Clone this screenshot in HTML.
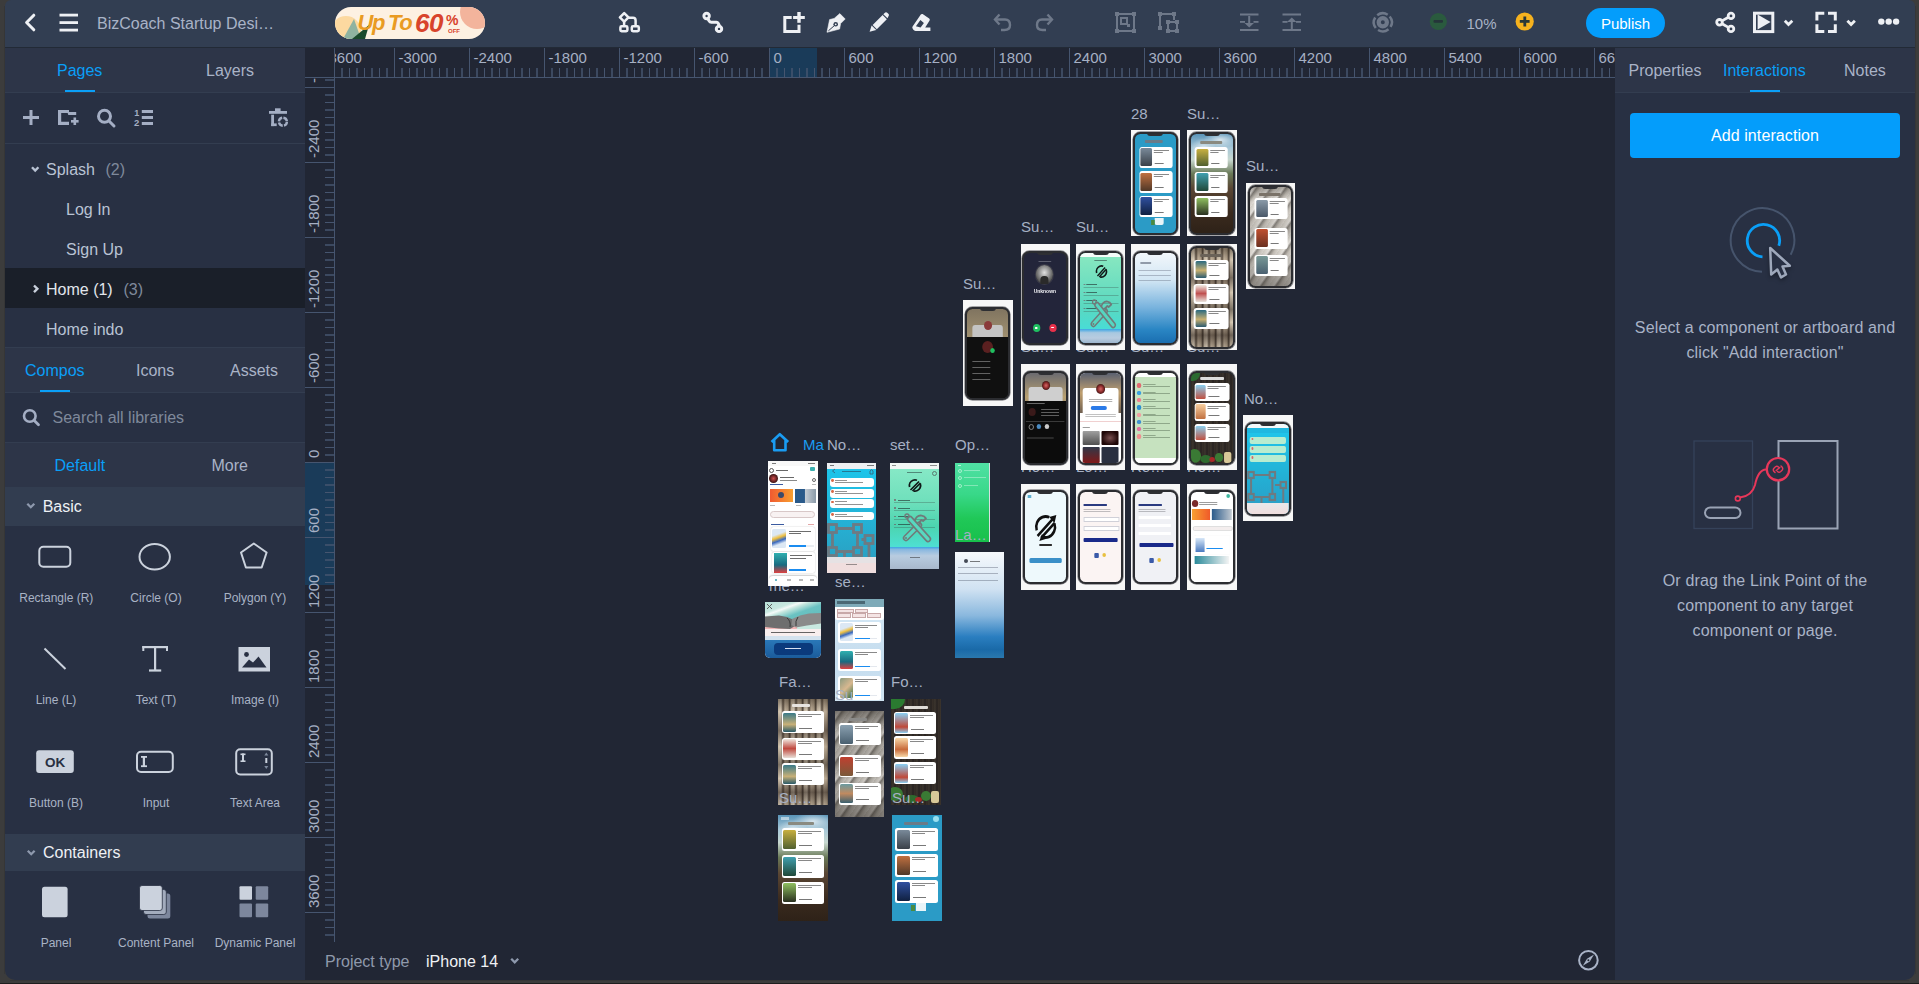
<!DOCTYPE html><html><head><meta charset="utf-8"><style>
html,body{margin:0;padding:0;}
body{width:1919px;height:984px;background:#3c3c3c;overflow:hidden;position:relative;font-family:"Liberation Sans",sans-serif;}
.t{position:absolute;white-space:nowrap;}
.r{position:absolute;}
#app{position:absolute;left:0;top:0;width:1919px;height:984px;clip-path:inset(0px 4px 4px 5px round 6px 6px 10px 10px);}
svg{position:absolute;overflow:visible;}
</style></head><body>
<div style="position:absolute;left:0;top:983px;width:1919px;height:1px;background:#1e1e1e"></div>
<div style="position:absolute;left:4px;top:6px;width:1px;height:968px;background:#363636"></div><div style="position:absolute;left:1915px;top:6px;width:1px;height:968px;background:#363636"></div><div style="position:absolute;left:10px;top:980px;width:1899px;height:1px;background:#363636"></div>
<div id="app">
<div class="r" style="left:0px;top:0px;width:1919px;height:47px;background:#323e52;"></div>
<div class="r" style="left:0px;top:47px;width:1919px;height:1px;background:#222a36;"></div>
<div class="r" style="left:0px;top:48px;width:305px;height:936px;background:#283043;"></div>
<div class="r" style="left:0px;top:48px;width:305px;height:44px;background:#2d3548;"></div>
<div class="r" style="left:0px;top:92px;width:305px;height:1px;background:#333d50;"></div>
<div class="r" style="left:305px;top:48px;width:1310px;height:936px;background:#212634;"></div>
<div class="r" style="left:1615px;top:48px;width:304px;height:936px;background:#283043;"></div>
<div class="r" style="left:1615px;top:48px;width:304px;height:44px;background:#2d3548;"></div>
<div class="r" style="left:1615px;top:92px;width:304px;height:1px;background:#333d50;"></div>
<svg style="left:0px;top:0px;" width="1919" height="47" viewBox="0 0 1919 47">
<polyline points="33.8,15.2 26.6,22.5 33.8,29.8" fill="none" stroke="#eef0f4" stroke-width="3" stroke-linecap="round" stroke-linejoin="round"/>
<rect x="59.5" y="13.7" width="18.5" height="2.8" fill="#eef0f4"/>
<rect x="59.5" y="21.2" width="18.5" height="2.8" fill="#eef0f4"/>
<rect x="59.5" y="28.7" width="18.5" height="2.8" fill="#eef0f4"/>
</svg>
<div class="t" style="left:97px;top:16px;font-size:16px;line-height:16px;color:#a9b3c7;">BizCoach Startup Desi…</div>
<div class="r" style="left:335px;top:7px;width:150px;height:32px;border-radius:16px;background:#fdf1e2;overflow:hidden;">
<div class="r" style="left:-4px;top:9px;width:30px;height:30px;border-radius:50%;background:#fcd9a0"></div>
<div class="r" style="left:125px;top:-12px;width:34px;height:34px;border-radius:50%;background:#f3b49c"></div>
<svg style="left:0;top:0" width="150" height="32"><polygon points="8,32 19,12 26,32" fill="#8fb3a0"/><polygon points="17,32 34,18 30,32" fill="#1a4a2c"/></svg>
<div class="t" style="left:22.5px;top:5px;font-size:22px;line-height:22px;font-weight:bold;font-style:italic;color:#e99b22;letter-spacing:-1.3px;word-spacing:-1px">Up To</div>
<div class="t" style="left:80px;top:3px;font-size:26px;line-height:26px;font-weight:bold;font-style:italic;color:#d8432b;letter-spacing:-0.5px">60</div>
<div class="t" style="left:111px;top:6px;font-size:14px;line-height:14px;font-weight:bold;color:#d8432b">%</div>
<div class="t" style="left:113px;top:21px;font-size:6px;line-height:6px;font-weight:bold;color:#d8432b">OFF</div>
</div>
<svg style="left:0px;top:0px;" width="1919" height="47" viewBox="0 0 1919 47">
<g fill="none" stroke="#eef0f4" stroke-width="2.5" stroke-linejoin="round">
  <polygon points="624.2,13.1 628.5,17.4 624.2,21.7 619.9,17.4"/>
  <line x1="624.1" y1="21.5" x2="624.1" y2="25.5"/>
  <path d="M628.3,17.8 H633 Q635.6,17.8 635.6,20.5 V25.5"/>
  <rect x="620.4" y="26.3" width="7" height="5" rx="1.2"/>
  <rect x="631.8" y="26.3" width="7" height="5" rx="1.2"/>
</g>
<g fill="none" stroke="#eef0f4" stroke-width="3">
  <circle cx="706.6" cy="16" r="2.7"/>
  <circle cx="719" cy="28.9" r="2.7"/>
  <path d="M707.8,18.8 L709.2,21 Q709.9,22.3 711.4,22.3 H716.5 Q717.6,22.3 718.3,23.5 L719.5,26"/>
</g>
<g fill="none" stroke="#eef0f4" stroke-width="3" stroke-linejoin="miter">
  <path d="M791.7,17.5 H784.8 V31.5 H799 V24.8"/>
</g>
<g fill="#eef0f4">
  <rect x="797.3" y="12" width="3.4" height="10.8"/>
  <rect x="793.1" y="16" width="11.7" height="3"/>
  <path d="M827,32.3 L829.6,19.6 L834.2,18.4 L839.8,13.6 L845.2,19 L840.6,23.6 L839.6,29 Z" stroke="#eef0f4" stroke-width="0.6" stroke-linejoin="round"/>
  <path d="M869.6,31.8 L871.6,25.6 L876.3,30 Z"/>
  <path d="M872.6,25 L882.6,15 L886.8,19.2 L876.8,29.2 Z"/>
  <path d="M883.3,14.3 L885.2,12.6 Q886.2,11.8 887.2,12.7 L888.6,14.1 Q889.4,15 888.6,16 L887.5,18.3 Z"/>
  <path d="M912.6,26.4 L920.8,14.4 Q921.6,13.6 922.6,14.1 L929.2,18.6 Q930.2,19.4 929.6,20.6 L925.2,27.6 H930.4 V30.9 H915.6 Q914,30.9 913.2,29.6 L912.5,28.3 Q912,27.3 912.6,26.4 Z M915.9,26.3 L920.4,19.9 L923.9,22.9 L920.6,27.6 Z" fill-rule="evenodd"/>
</g>
<circle cx="835.7" cy="24.3" r="2.3" fill="#323e52"/>
<circle cx="835.7" cy="24.3" r="0.9" fill="#eef0f4"/>
<line x1="828.4" y1="30.8" x2="834.4" y2="25.6" stroke="#323e52" stroke-width="1"/>
</svg>
<svg style="left:0px;top:0px;" width="1919" height="47" viewBox="0 0 1919 47">
<g fill="none" stroke="#6e7889" stroke-width="2.4">
  <path d="M995.5,19.5 H1005 Q1010,19.5 1010,25 Q1010,30 1004.5,30 H1001"/>
  <polyline points="999.5,14.5 995,19.5 999.5,24.5" stroke-linejoin="miter"/>
  <path d="M1051.5,19.5 H1042 Q1037,19.5 1037,25 Q1037,30 1042.5,30 H1046"/>
  <polyline points="1047.5,14.5 1052,19.5 1047.5,24.5"/>
</g>
<g fill="#6e7889">
  <rect x="1115" y="12" width="4" height="4"/><rect x="1132" y="12" width="4" height="4"/>
  <rect x="1115" y="29" width="4" height="4"/><rect x="1132" y="29" width="4" height="4"/>
  <rect x="1118" y="13" width="14" height="2"/><rect x="1118" y="30" width="14" height="2"/>
  <rect x="1116" y="15" width="2" height="15"/><rect x="1133" y="15" width="2" height="15"/>
  <rect x="1121" y="18" width="6" height="6" fill="none" stroke="#6e7889" stroke-width="2"/>
  <rect x="1127" y="24" width="3" height="3"/>
  <rect x="1158" y="12" width="4" height="4"/><rect x="1172" y="12" width="4" height="4"/>
  <rect x="1158" y="26" width="4" height="4"/>
  <rect x="1161" y="13" width="12" height="2"/><rect x="1159" y="15" width="2" height="12"/>
  <rect x="1173" y="15" width="2" height="5"/>
  <rect x="1166" y="20" width="4" height="4"/><rect x="1175" y="20" width="4" height="4"/>
  <rect x="1166" y="29" width="4" height="4"/><rect x="1175" y="29" width="4" height="4"/>
  <rect x="1169" y="21" width="7" height="2"/><rect x="1169" y="30" width="7" height="2"/>
  <rect x="1167" y="23" width="2" height="7"/><rect x="1176" y="23" width="2" height="7"/>
  <rect x="1240" y="13.5" width="18.5" height="2"/>
  <rect x="1240" y="21" width="5" height="1.8"/><rect x="1253.5" y="21" width="5" height="1.8"/>
  <rect x="1240" y="29" width="18.5" height="2"/>
  <rect x="1248.2" y="16" width="2" height="8"/>
  <polygon points="1244.5,23 1254,23 1249.2,27.5"/>
  <rect x="1282.5" y="13.5" width="18.5" height="2"/>
  <rect x="1282.5" y="21" width="5" height="1.8"/><rect x="1296" y="21" width="5" height="1.8"/>
  <rect x="1282.5" y="29" width="18.5" height="2"/>
  <rect x="1290.8" y="21" width="2" height="8"/>
  <polygon points="1287,22 1296.5,22 1291.8,17.5"/>
</g>
<g fill="none" stroke="#6e7889">
  <circle cx="1382.8" cy="22.3" r="9" stroke-width="2.5" stroke-dasharray="11.1 3.04" transform="rotate(-40 1382.8 22.3)"/>
  <circle cx="1382.8" cy="22.3" r="4.1" stroke-width="4.2"/>
</g>
<circle cx="1438.3" cy="21.5" r="8.6" fill="#2a5a3e"/>
<rect x="1433.5" y="20" width="9.5" height="2.8" rx="1" fill="#25353a"/>
<circle cx="1524.7" cy="21.5" r="9.1" fill="#f6b21e"/>
<rect x="1519.8" y="20" width="9.8" height="2.8" fill="#2b3838"/>
<rect x="1523.4" y="16.5" width="2.8" height="10" fill="#2b3838"/>
</svg>
<div class="t" style="left:1466.5px;top:16px;font-size:15px;line-height:15px;color:#a9b3c7;">10%</div>
<div class="r" style="left:1586px;top:8px;width:79px;height:30px;border-radius:15px;background:#049dfb"></div>
<div class="t" style="left:1586.0px;width:79px;text-align:center;top:16px;font-size:15px;line-height:15px;color:#ffffff;">Publish</div>
<svg style="left:0px;top:0px;" width="1919" height="47" viewBox="0 0 1919 47">
<g fill="none" stroke="#eef0f4" stroke-width="2.8">
  <circle cx="1731" cy="15.9" r="2.8"/><circle cx="1719.5" cy="22.3" r="2.8"/><circle cx="1731" cy="28.9" r="2.8"/>
  <line x1="1722" y1="20.9" x2="1728.4" y2="17.3"/><line x1="1722" y1="23.8" x2="1728.4" y2="27.4"/>
  <rect x="1754.5" y="13.2" width="18.3" height="18.4" stroke-width="3"/>
  <polyline points="1784.8,20.8 1788.5,24.6 1792.3,20.8" stroke-width="2.8"/>
  <polyline points="1816.9,20.5 1816.9,13.2 1824.3,13.2" stroke-width="3"/><polyline points="1828,13.2 1835.3,13.2 1835.3,20.5" stroke-width="3"/>
  <polyline points="1816.9,24.3 1816.9,31.6 1824.3,31.6" stroke-width="3"/><polyline points="1828,31.6 1835.3,31.6 1835.3,24.3" stroke-width="3"/>
  <polyline points="1847.4,20.8 1851.1,24.6 1854.9,20.8" stroke-width="2.8"/>
</g>
<polygon points="1757.6,14.6 1770.6,22 1757.6,29.4" fill="#eef0f4"/>
<g fill="#eef0f4"><circle cx="1881.3" cy="21.6" r="3.2"/><circle cx="1888.7" cy="21.6" r="3.2"/><circle cx="1896.1" cy="21.6" r="3.2"/></g>
</svg>
<div class="t" style="left:57px;top:63px;font-size:16px;line-height:16px;color:#0a9ff7;">Pages</div>
<div class="t" style="left:206px;top:63px;font-size:16px;line-height:16px;color:#a9b3c7;">Layers</div>
<div class="r" style="left:65px;top:90px;width:30px;height:2px;background:#0a9ff7;"></div>
<svg style="left:0px;top:93px;" width="305" height="50" viewBox="0 0 305 50">
<g fill="#a4aec4" transform="translate(0,-93)">
  <rect x="29.5" y="110" width="3" height="15"/>
  <rect x="23" y="116" width="16" height="3"/>
  <path d="M58,110 H69 V112 H76.2 V115 H69 Q67.8,115 67.8,113.5 V113 H61.2 V121.8 H69 V125 H58 Z"/>
  <rect x="73.5" y="117.5" width="2.6" height="7.5"/>
  <rect x="71" y="120" width="7.6" height="2.6"/>
  <rect x="141.8" y="110" width="11.2" height="3"/>
  <rect x="141.8" y="116" width="11.2" height="3"/>
  <rect x="141.8" y="122" width="11.2" height="3"/>
  <rect x="275" y="108.3" width="5.6" height="3"/>
  <rect x="269" y="111" width="18" height="2.8"/>
  <rect x="271.2" y="114.7" width="2.8" height="11.4"/>
  <rect x="271.2" y="123.4" width="5.5" height="2.7"/>
</g>
<g fill="none" stroke="#a4aec4" transform="translate(0,-93)">
  <circle cx="104.5" cy="116.3" r="6" stroke-width="3"/>
  <line x1="109" y1="121" x2="114" y2="126" stroke-width="3" stroke-linecap="round"/>
  <circle cx="282.9" cy="121.7" r="4" stroke-width="2.4" stroke-dasharray="5 1.3"/>
</g>
<g fill="#a4aec4" font-family="Liberation Sans" font-weight="bold" transform="translate(0,-93)">
  <text x="134.2" y="116" font-size="9">1</text>
  <text x="134" y="126.2" font-size="9.5">2</text>
</g>
</svg>
<div class="r" style="left:0px;top:143px;width:305px;height:1px;background:#333d50;"></div>
<div class="t" style="left:46px;top:162px;font-size:16px;line-height:16px;color:#b9c3d4;">Splash</div>
<div class="t" style="left:105.5px;top:162px;font-size:16px;line-height:16px;color:#7f899b;">(2)</div>
<div class="t" style="left:66px;top:202px;font-size:16px;line-height:16px;color:#b9c3d4;">Log In</div>
<div class="t" style="left:66px;top:242px;font-size:16px;line-height:16px;color:#b9c3d4;">Sign Up</div>
<div class="r" style="left:0px;top:268px;width:305px;height:40px;background:#1a1f29;"></div>
<svg style="left:0px;top:150px;" width="305" height="200" viewBox="0 0 305 200">
<g fill="none" stroke="#b9c3d4" stroke-width="2.4" transform="translate(0,-150)">
  <polyline points="32,167.2 35.2,170.6 38.4,167.2"/>
  <polyline points="34,285.5 37.4,288.8 34,292.2" stroke="#c9d0dc"/>
</g></svg>
<div class="t" style="left:46px;top:282px;font-size:16px;line-height:16px;color:#e2e6ec;">Home (1)</div>
<div class="t" style="left:123.5px;top:282px;font-size:16px;line-height:16px;color:#7f899b;">(3)</div>
<div class="t" style="left:46px;top:322px;font-size:16px;line-height:16px;color:#b9c3d4;">Home indo</div>
<div class="r" style="left:0px;top:347px;width:305px;height:1px;background:#333d50;"></div>
<div class="r" style="left:0px;top:348px;width:305px;height:44px;background:#2d3548;"></div>
<div class="r" style="left:0px;top:392px;width:305px;height:1px;background:#333d50;"></div>
<div class="t" style="left:25px;top:363px;font-size:16px;line-height:16px;color:#0a9ff7;">Compos</div>
<div class="t" style="left:136px;top:363px;font-size:16px;line-height:16px;color:#a9b3c7;">Icons</div>
<div class="t" style="left:230px;top:363px;font-size:16px;line-height:16px;color:#a9b3c7;">Assets</div>
<div class="r" style="left:40px;top:390px;width:30px;height:2px;background:#0a9ff7;"></div>
<svg style="left:0px;top:400px;" width="60" height="40" viewBox="0 0 60 40"><g fill="none" stroke="#a4aec4" transform="translate(0,-400)">
<circle cx="29.8" cy="416" r="5.8" stroke-width="2.6"/>
<line x1="34.2" y1="420.4" x2="38.5" y2="424.7" stroke-width="2.8" stroke-linecap="round"/></g></svg>
<div class="t" style="left:52.5px;top:410px;font-size:16px;line-height:16px;color:#7f899b;">Search all libraries</div>
<div class="r" style="left:0px;top:442px;width:305px;height:1px;background:#333d50;"></div>
<div class="r" style="left:0px;top:443px;width:305px;height:44px;background:#2d3548;"></div>
<div class="t" style="left:54.5px;top:458px;font-size:16px;line-height:16px;color:#0a9ff7;">Default</div>
<div class="t" style="left:211.5px;top:458px;font-size:16px;line-height:16px;color:#a9b3c7;">More</div>
<div class="r" style="left:0px;top:487px;width:305px;height:39px;background:#323d50;"></div>
<svg style="left:0px;top:490px;" width="60" height="30" viewBox="0 0 60 30"><polyline transform="translate(0,-490)" points="27.3,503.8 30.8,507.2 34.3,503.8" fill="none" stroke="#8e99ad" stroke-width="2.3"/></svg>
<div class="t" style="left:42.7px;top:499px;font-size:16px;line-height:16px;color:#eef1f5;">Basic</div>
<svg style="left:0px;top:530px;" width="305" height="300" viewBox="0 0 305 300">
<g transform="translate(0,-530)" fill="none" stroke="#cbd2dd" stroke-width="2">
  <rect x="39.3" y="546.8" width="31" height="20" rx="4"/>
  <ellipse cx="154.7" cy="556.7" rx="15.2" ry="12.8"/>
  <polygon points="253.8,543.5 266.6,552.5 261.7,567.5 245.9,567.5 241,552.5" stroke-linejoin="round"/>
  <line x1="44.5" y1="648.5" x2="65.5" y2="669"/>
</g>
<g transform="translate(0,-530)" fill="#cbd2dd">
  <rect x="142.3" y="646" width="25.7" height="2.2"/>
  <rect x="142.3" y="646" width="2" height="5"/>
  <rect x="166" y="646" width="2" height="5"/>
  <rect x="154" y="646" width="2.2" height="25"/>
  <rect x="149" y="669.4" width="12.2" height="2.2"/>
  <path d="M238.5,647 H270 V671.5 H238.5 Z M242,667.5 H266.5 L258.5,656.5 L253,662.5 L249,659.5 Z" fill-rule="evenodd"/>
  <circle cx="246.5" cy="654.5" r="2.4" fill="#283043"/>
</g>
</svg>
<div class="t" style="left:6.299999999999997px;width:100px;text-align:center;top:592px;font-size:12px;line-height:12px;color:#a9b3c5;">Rectangle (R)</div>
<div class="t" style="left:106.0px;width:100px;text-align:center;top:592px;font-size:12px;line-height:12px;color:#a9b3c5;">Circle (O)</div>
<div class="t" style="left:205.0px;width:100px;text-align:center;top:592px;font-size:12px;line-height:12px;color:#a9b3c5;">Polygon (Y)</div>
<div class="t" style="left:6.0px;width:100px;text-align:center;top:694px;font-size:12px;line-height:12px;color:#a9b3c5;">Line (L)</div>
<div class="t" style="left:106.0px;width:100px;text-align:center;top:694px;font-size:12px;line-height:12px;color:#a9b3c5;">Text (T)</div>
<div class="t" style="left:205.0px;width:100px;text-align:center;top:694px;font-size:12px;line-height:12px;color:#a9b3c5;">Image (I)</div>
<svg style="left:0px;top:740px;" width="305" height="40" viewBox="0 0 305 40">
<g transform="translate(0,-740)">
  <rect x="36.2" y="750.3" width="37.6" height="22.8" rx="3" fill="#cbd2dd"/>
  <text x="55" y="767" font-family="Liberation Sans" font-weight="bold" font-size="13.5" fill="#283043" text-anchor="middle">OK</text>
  <rect x="137" y="751.8" width="35.8" height="20.2" rx="4" fill="none" stroke="#cbd2dd" stroke-width="2"/>
  <rect x="142.8" y="756" width="2.2" height="11" fill="#cbd2dd"/>
  <rect x="141" y="756" width="6" height="1.8" fill="#cbd2dd"/>
  <rect x="141" y="765.3" width="6" height="1.8" fill="#cbd2dd"/>
  <rect x="236.2" y="749.2" width="35.6" height="25.3" rx="4" fill="none" stroke="#cbd2dd" stroke-width="2"/>
  <rect x="242" y="753.5" width="2" height="8.5" fill="#cbd2dd"/>
  <rect x="240.5" y="753.5" width="5" height="1.6" fill="#cbd2dd"/>
  <rect x="240.5" y="760.4" width="5" height="1.6" fill="#cbd2dd"/>
  <rect x="265.3" y="758" width="2" height="5" fill="#cbd2dd"/>
  <polygon points="264.3,755.5 266.3,752.5 268.3,755.5" fill="#7f8a9e"/>
  <polygon points="264.3,766 266.3,769 268.3,766" fill="#7f8a9e"/>
</g></svg>
<div class="t" style="left:6.0px;width:100px;text-align:center;top:797px;font-size:12px;line-height:12px;color:#a9b3c5;">Button (B)</div>
<div class="t" style="left:106.0px;width:100px;text-align:center;top:797px;font-size:12px;line-height:12px;color:#a9b3c5;">Input</div>
<div class="t" style="left:205.0px;width:100px;text-align:center;top:797px;font-size:12px;line-height:12px;color:#a9b3c5;">Text Area</div>
<div class="r" style="left:0px;top:834px;width:305px;height:37px;background:#323d50;"></div>
<svg style="left:0px;top:840px;" width="60" height="30" viewBox="0 0 60 30"><polyline transform="translate(0,-840)" points="27.8,850.8 31.2,854.2 34.6,850.8" fill="none" stroke="#8e99ad" stroke-width="2.3"/></svg>
<div class="t" style="left:43px;top:845px;font-size:16px;line-height:16px;color:#eef1f5;">Containers</div>
<svg style="left:0px;top:880px;" width="305" height="45" viewBox="0 0 305 45">
<g transform="translate(0,-880)">
  <rect x="42" y="886.8" width="25.6" height="30.4" rx="2.5" fill="#cbd2dd"/>
  <rect x="147.5" y="893.5" width="22.8" height="25" rx="2.5" fill="#7d879d"/>
  <rect x="143.5" y="889.5" width="22.8" height="25" rx="2.5" fill="#a3acbd" stroke="#283043" stroke-width="0.8"/>
  <rect x="139.5" y="885.5" width="22.8" height="25" rx="2.5" fill="#cbd2dd" stroke="#283043" stroke-width="0.8"/>
  <rect x="239.5" y="886.3" width="12.5" height="13.5" rx="1" fill="#cbd2dd"/>
  <rect x="255.7" y="886.3" width="12.5" height="13.5" rx="1" fill="#7d879d"/>
  <rect x="239.5" y="903.6" width="12.5" height="13.6" rx="1" fill="#7d879d"/>
  <rect x="255.7" y="903.6" width="12.5" height="13.6" rx="1" fill="#7d879d"/>
</g></svg>
<div class="t" style="left:6.0px;width:100px;text-align:center;top:937px;font-size:12px;line-height:12px;color:#a9b3c5;">Panel</div>
<div class="t" style="left:106.0px;width:100px;text-align:center;top:937px;font-size:12px;line-height:12px;color:#a9b3c5;">Content Panel</div>
<div class="t" style="left:205.0px;width:100px;text-align:center;top:937px;font-size:12px;line-height:12px;color:#a9b3c5;">Dynamic Panel</div>
<div class="r" style="left:770px;top:48px;width:47px;height:29px;background:#1a3b59;"></div>
<div class="r" style="left:305px;top:463px;width:29px;height:122px;background:#1a3b59;"></div>
<svg style="left:305px;top:48px;" width="1310" height="30" viewBox="0 0 1310 30"><g fill="#46556f"><rect x="29.00" y="20" width="1" height="9"/><rect x="36.25" y="20" width="1.5" height="9"/><rect x="44.00" y="20" width="1" height="9"/><rect x="51.25" y="20" width="1.5" height="9"/><rect x="59.00" y="20" width="1" height="9"/><rect x="66.25" y="20" width="1.5" height="9"/><rect x="74.00" y="20" width="1" height="9"/><rect x="81.25" y="20" width="1.5" height="9"/><rect x="89.00" y="0" width="1" height="29"/><rect x="96.25" y="20" width="1.5" height="9"/><rect x="104.00" y="20" width="1" height="9"/><rect x="111.25" y="20" width="1.5" height="9"/><rect x="119.00" y="20" width="1" height="9"/><rect x="126.25" y="20" width="1.5" height="9"/><rect x="134.00" y="20" width="1" height="9"/><rect x="141.25" y="20" width="1.5" height="9"/><rect x="149.00" y="20" width="1" height="9"/><rect x="156.25" y="20" width="1.5" height="9"/><rect x="164.00" y="0" width="1" height="29"/><rect x="171.25" y="20" width="1.5" height="9"/><rect x="179.00" y="20" width="1" height="9"/><rect x="186.25" y="20" width="1.5" height="9"/><rect x="194.00" y="20" width="1" height="9"/><rect x="201.25" y="20" width="1.5" height="9"/><rect x="209.00" y="20" width="1" height="9"/><rect x="216.25" y="20" width="1.5" height="9"/><rect x="224.00" y="20" width="1" height="9"/><rect x="231.25" y="20" width="1.5" height="9"/><rect x="239.00" y="0" width="1" height="29"/><rect x="246.25" y="20" width="1.5" height="9"/><rect x="254.00" y="20" width="1" height="9"/><rect x="261.25" y="20" width="1.5" height="9"/><rect x="269.00" y="20" width="1" height="9"/><rect x="276.25" y="20" width="1.5" height="9"/><rect x="284.00" y="20" width="1" height="9"/><rect x="291.25" y="20" width="1.5" height="9"/><rect x="299.00" y="20" width="1" height="9"/><rect x="306.25" y="20" width="1.5" height="9"/><rect x="314.00" y="0" width="1" height="29"/><rect x="321.25" y="20" width="1.5" height="9"/><rect x="329.00" y="20" width="1" height="9"/><rect x="336.25" y="20" width="1.5" height="9"/><rect x="344.00" y="20" width="1" height="9"/><rect x="351.25" y="20" width="1.5" height="9"/><rect x="359.00" y="20" width="1" height="9"/><rect x="366.25" y="20" width="1.5" height="9"/><rect x="374.00" y="20" width="1" height="9"/><rect x="381.25" y="20" width="1.5" height="9"/><rect x="389.00" y="0" width="1" height="29"/><rect x="396.25" y="20" width="1.5" height="9"/><rect x="404.00" y="20" width="1" height="9"/><rect x="411.25" y="20" width="1.5" height="9"/><rect x="419.00" y="20" width="1" height="9"/><rect x="426.25" y="20" width="1.5" height="9"/><rect x="434.00" y="20" width="1" height="9"/><rect x="441.25" y="20" width="1.5" height="9"/><rect x="449.00" y="20" width="1" height="9"/><rect x="456.25" y="20" width="1.5" height="9"/><rect x="464.00" y="0" width="1" height="29"/><rect x="471.25" y="20" width="1.5" height="9"/><rect x="479.00" y="20" width="1" height="9"/><rect x="486.25" y="20" width="1.5" height="9"/><rect x="494.00" y="20" width="1" height="9"/><rect x="501.25" y="20" width="1.5" height="9"/><rect x="509.00" y="20" width="1" height="9"/><rect x="516.25" y="20" width="1.5" height="9"/><rect x="524.00" y="20" width="1" height="9"/><rect x="531.25" y="20" width="1.5" height="9"/><rect x="539.00" y="0" width="1" height="29"/><rect x="546.25" y="20" width="1.5" height="9"/><rect x="554.00" y="20" width="1" height="9"/><rect x="561.25" y="20" width="1.5" height="9"/><rect x="569.00" y="20" width="1" height="9"/><rect x="576.25" y="20" width="1.5" height="9"/><rect x="584.00" y="20" width="1" height="9"/><rect x="591.25" y="20" width="1.5" height="9"/><rect x="599.00" y="20" width="1" height="9"/><rect x="606.25" y="20" width="1.5" height="9"/><rect x="614.00" y="0" width="1" height="29"/><rect x="621.25" y="20" width="1.5" height="9"/><rect x="629.00" y="20" width="1" height="9"/><rect x="636.25" y="20" width="1.5" height="9"/><rect x="644.00" y="20" width="1" height="9"/><rect x="651.25" y="20" width="1.5" height="9"/><rect x="659.00" y="20" width="1" height="9"/><rect x="666.25" y="20" width="1.5" height="9"/><rect x="674.00" y="20" width="1" height="9"/><rect x="681.25" y="20" width="1.5" height="9"/><rect x="689.00" y="0" width="1" height="29"/><rect x="696.25" y="20" width="1.5" height="9"/><rect x="704.00" y="20" width="1" height="9"/><rect x="711.25" y="20" width="1.5" height="9"/><rect x="719.00" y="20" width="1" height="9"/><rect x="726.25" y="20" width="1.5" height="9"/><rect x="734.00" y="20" width="1" height="9"/><rect x="741.25" y="20" width="1.5" height="9"/><rect x="749.00" y="20" width="1" height="9"/><rect x="756.25" y="20" width="1.5" height="9"/><rect x="764.00" y="0" width="1" height="29"/><rect x="771.25" y="20" width="1.5" height="9"/><rect x="779.00" y="20" width="1" height="9"/><rect x="786.25" y="20" width="1.5" height="9"/><rect x="794.00" y="20" width="1" height="9"/><rect x="801.25" y="20" width="1.5" height="9"/><rect x="809.00" y="20" width="1" height="9"/><rect x="816.25" y="20" width="1.5" height="9"/><rect x="824.00" y="20" width="1" height="9"/><rect x="831.25" y="20" width="1.5" height="9"/><rect x="839.00" y="0" width="1" height="29"/><rect x="846.25" y="20" width="1.5" height="9"/><rect x="854.00" y="20" width="1" height="9"/><rect x="861.25" y="20" width="1.5" height="9"/><rect x="869.00" y="20" width="1" height="9"/><rect x="876.25" y="20" width="1.5" height="9"/><rect x="884.00" y="20" width="1" height="9"/><rect x="891.25" y="20" width="1.5" height="9"/><rect x="899.00" y="20" width="1" height="9"/><rect x="906.25" y="20" width="1.5" height="9"/><rect x="914.00" y="0" width="1" height="29"/><rect x="921.25" y="20" width="1.5" height="9"/><rect x="929.00" y="20" width="1" height="9"/><rect x="936.25" y="20" width="1.5" height="9"/><rect x="944.00" y="20" width="1" height="9"/><rect x="951.25" y="20" width="1.5" height="9"/><rect x="959.00" y="20" width="1" height="9"/><rect x="966.25" y="20" width="1.5" height="9"/><rect x="974.00" y="20" width="1" height="9"/><rect x="981.25" y="20" width="1.5" height="9"/><rect x="989.00" y="0" width="1" height="29"/><rect x="996.25" y="20" width="1.5" height="9"/><rect x="1004.00" y="20" width="1" height="9"/><rect x="1011.25" y="20" width="1.5" height="9"/><rect x="1019.00" y="20" width="1" height="9"/><rect x="1026.25" y="20" width="1.5" height="9"/><rect x="1034.00" y="20" width="1" height="9"/><rect x="1041.25" y="20" width="1.5" height="9"/><rect x="1049.00" y="20" width="1" height="9"/><rect x="1056.25" y="20" width="1.5" height="9"/><rect x="1064.00" y="0" width="1" height="29"/><rect x="1071.25" y="20" width="1.5" height="9"/><rect x="1079.00" y="20" width="1" height="9"/><rect x="1086.25" y="20" width="1.5" height="9"/><rect x="1094.00" y="20" width="1" height="9"/><rect x="1101.25" y="20" width="1.5" height="9"/><rect x="1109.00" y="20" width="1" height="9"/><rect x="1116.25" y="20" width="1.5" height="9"/><rect x="1124.00" y="20" width="1" height="9"/><rect x="1131.25" y="20" width="1.5" height="9"/><rect x="1139.00" y="0" width="1" height="29"/><rect x="1146.25" y="20" width="1.5" height="9"/><rect x="1154.00" y="20" width="1" height="9"/><rect x="1161.25" y="20" width="1.5" height="9"/><rect x="1169.00" y="20" width="1" height="9"/><rect x="1176.25" y="20" width="1.5" height="9"/><rect x="1184.00" y="20" width="1" height="9"/><rect x="1191.25" y="20" width="1.5" height="9"/><rect x="1199.00" y="20" width="1" height="9"/><rect x="1206.25" y="20" width="1.5" height="9"/><rect x="1214.00" y="0" width="1" height="29"/><rect x="1221.25" y="20" width="1.5" height="9"/><rect x="1229.00" y="20" width="1" height="9"/><rect x="1236.25" y="20" width="1.5" height="9"/><rect x="1244.00" y="20" width="1" height="9"/><rect x="1251.25" y="20" width="1.5" height="9"/><rect x="1259.00" y="20" width="1" height="9"/><rect x="1266.25" y="20" width="1.5" height="9"/><rect x="1274.00" y="20" width="1" height="9"/><rect x="1281.25" y="20" width="1.5" height="9"/><rect x="1289.00" y="0" width="1" height="29"/><rect x="1296.25" y="20" width="1.5" height="9"/><rect x="1304.00" y="20" width="1" height="9"/><rect x="0" y="29" width="1310" height="1"/></g></svg>
<div class="r" style="left:335px;top:48px;width:1280px;height:29px;overflow:hidden"><div class="t" style="left:-11.5px;top:2px;font-size:15px;line-height:15px;color:#a6b0c4">-3600</div><div class="t" style="left:63.5px;top:2px;font-size:15px;line-height:15px;color:#a6b0c4">-3000</div><div class="t" style="left:138.5px;top:2px;font-size:15px;line-height:15px;color:#a6b0c4">-2400</div><div class="t" style="left:213.5px;top:2px;font-size:15px;line-height:15px;color:#a6b0c4">-1800</div><div class="t" style="left:288.5px;top:2px;font-size:15px;line-height:15px;color:#a6b0c4">-1200</div><div class="t" style="left:363.5px;top:2px;font-size:15px;line-height:15px;color:#a6b0c4">-600</div><div class="t" style="left:438.5px;top:2px;font-size:15px;line-height:15px;color:#a6b0c4">0</div><div class="t" style="left:513.5px;top:2px;font-size:15px;line-height:15px;color:#a6b0c4">600</div><div class="t" style="left:588.5px;top:2px;font-size:15px;line-height:15px;color:#a6b0c4">1200</div><div class="t" style="left:663.5px;top:2px;font-size:15px;line-height:15px;color:#a6b0c4">1800</div><div class="t" style="left:738.5px;top:2px;font-size:15px;line-height:15px;color:#a6b0c4">2400</div><div class="t" style="left:813.5px;top:2px;font-size:15px;line-height:15px;color:#a6b0c4">3000</div><div class="t" style="left:888.5px;top:2px;font-size:15px;line-height:15px;color:#a6b0c4">3600</div><div class="t" style="left:963.5px;top:2px;font-size:15px;line-height:15px;color:#a6b0c4">4200</div><div class="t" style="left:1038.5px;top:2px;font-size:15px;line-height:15px;color:#a6b0c4">4800</div><div class="t" style="left:1113.5px;top:2px;font-size:15px;line-height:15px;color:#a6b0c4">5400</div><div class="t" style="left:1188.5px;top:2px;font-size:15px;line-height:15px;color:#a6b0c4">6000</div><div class="t" style="left:1263.5px;top:2px;font-size:15px;line-height:15px;color:#a6b0c4">6600</div></div>
<svg style="left:305px;top:48px;" width="30" height="894" viewBox="0 0 30 894"><g fill="#46556f"><rect x="20" y="31.25" width="9" height="1.5"/><rect x="0" y="39.00" width="29" height="1"/><rect x="20" y="46.25" width="9" height="1.5"/><rect x="20" y="54.00" width="9" height="1"/><rect x="20" y="61.25" width="9" height="1.5"/><rect x="20" y="69.00" width="9" height="1"/><rect x="20" y="76.25" width="9" height="1.5"/><rect x="20" y="84.00" width="9" height="1"/><rect x="20" y="91.25" width="9" height="1.5"/><rect x="20" y="99.00" width="9" height="1"/><rect x="20" y="106.25" width="9" height="1.5"/><rect x="0" y="114.00" width="29" height="1"/><rect x="20" y="121.25" width="9" height="1.5"/><rect x="20" y="129.00" width="9" height="1"/><rect x="20" y="136.25" width="9" height="1.5"/><rect x="20" y="144.00" width="9" height="1"/><rect x="20" y="151.25" width="9" height="1.5"/><rect x="20" y="159.00" width="9" height="1"/><rect x="20" y="166.25" width="9" height="1.5"/><rect x="20" y="174.00" width="9" height="1"/><rect x="20" y="181.25" width="9" height="1.5"/><rect x="0" y="189.00" width="29" height="1"/><rect x="20" y="196.25" width="9" height="1.5"/><rect x="20" y="204.00" width="9" height="1"/><rect x="20" y="211.25" width="9" height="1.5"/><rect x="20" y="219.00" width="9" height="1"/><rect x="20" y="226.25" width="9" height="1.5"/><rect x="20" y="234.00" width="9" height="1"/><rect x="20" y="241.25" width="9" height="1.5"/><rect x="20" y="249.00" width="9" height="1"/><rect x="20" y="256.25" width="9" height="1.5"/><rect x="0" y="264.00" width="29" height="1"/><rect x="20" y="271.25" width="9" height="1.5"/><rect x="20" y="279.00" width="9" height="1"/><rect x="20" y="286.25" width="9" height="1.5"/><rect x="20" y="294.00" width="9" height="1"/><rect x="20" y="301.25" width="9" height="1.5"/><rect x="20" y="309.00" width="9" height="1"/><rect x="20" y="316.25" width="9" height="1.5"/><rect x="20" y="324.00" width="9" height="1"/><rect x="20" y="331.25" width="9" height="1.5"/><rect x="0" y="339.00" width="29" height="1"/><rect x="20" y="346.25" width="9" height="1.5"/><rect x="20" y="354.00" width="9" height="1"/><rect x="20" y="361.25" width="9" height="1.5"/><rect x="20" y="369.00" width="9" height="1"/><rect x="20" y="376.25" width="9" height="1.5"/><rect x="20" y="384.00" width="9" height="1"/><rect x="20" y="391.25" width="9" height="1.5"/><rect x="20" y="399.00" width="9" height="1"/><rect x="20" y="406.25" width="9" height="1.5"/><rect x="0" y="414.00" width="29" height="1"/><rect x="20" y="421.25" width="9" height="1.5"/><rect x="20" y="429.00" width="9" height="1"/><rect x="20" y="436.25" width="9" height="1.5"/><rect x="20" y="444.00" width="9" height="1"/><rect x="20" y="451.25" width="9" height="1.5"/><rect x="20" y="459.00" width="9" height="1"/><rect x="20" y="466.25" width="9" height="1.5"/><rect x="20" y="474.00" width="9" height="1"/><rect x="20" y="481.25" width="9" height="1.5"/><rect x="0" y="489.00" width="29" height="1"/><rect x="20" y="496.25" width="9" height="1.5"/><rect x="20" y="504.00" width="9" height="1"/><rect x="20" y="511.25" width="9" height="1.5"/><rect x="20" y="519.00" width="9" height="1"/><rect x="20" y="526.25" width="9" height="1.5"/><rect x="20" y="534.00" width="9" height="1"/><rect x="20" y="541.25" width="9" height="1.5"/><rect x="20" y="549.00" width="9" height="1"/><rect x="20" y="556.25" width="9" height="1.5"/><rect x="0" y="564.00" width="29" height="1"/><rect x="20" y="571.25" width="9" height="1.5"/><rect x="20" y="579.00" width="9" height="1"/><rect x="20" y="586.25" width="9" height="1.5"/><rect x="20" y="594.00" width="9" height="1"/><rect x="20" y="601.25" width="9" height="1.5"/><rect x="20" y="609.00" width="9" height="1"/><rect x="20" y="616.25" width="9" height="1.5"/><rect x="20" y="624.00" width="9" height="1"/><rect x="20" y="631.25" width="9" height="1.5"/><rect x="0" y="639.00" width="29" height="1"/><rect x="20" y="646.25" width="9" height="1.5"/><rect x="20" y="654.00" width="9" height="1"/><rect x="20" y="661.25" width="9" height="1.5"/><rect x="20" y="669.00" width="9" height="1"/><rect x="20" y="676.25" width="9" height="1.5"/><rect x="20" y="684.00" width="9" height="1"/><rect x="20" y="691.25" width="9" height="1.5"/><rect x="20" y="699.00" width="9" height="1"/><rect x="20" y="706.25" width="9" height="1.5"/><rect x="0" y="714.00" width="29" height="1"/><rect x="20" y="721.25" width="9" height="1.5"/><rect x="20" y="729.00" width="9" height="1"/><rect x="20" y="736.25" width="9" height="1.5"/><rect x="20" y="744.00" width="9" height="1"/><rect x="20" y="751.25" width="9" height="1.5"/><rect x="20" y="759.00" width="9" height="1"/><rect x="20" y="766.25" width="9" height="1.5"/><rect x="20" y="774.00" width="9" height="1"/><rect x="20" y="781.25" width="9" height="1.5"/><rect x="0" y="789.00" width="29" height="1"/><rect x="20" y="796.25" width="9" height="1.5"/><rect x="20" y="804.00" width="9" height="1"/><rect x="20" y="811.25" width="9" height="1.5"/><rect x="20" y="819.00" width="9" height="1"/><rect x="20" y="826.25" width="9" height="1.5"/><rect x="20" y="834.00" width="9" height="1"/><rect x="20" y="841.25" width="9" height="1.5"/><rect x="20" y="849.00" width="9" height="1"/><rect x="20" y="856.25" width="9" height="1.5"/><rect x="0" y="864.00" width="29" height="1"/><rect x="20" y="871.25" width="9" height="1.5"/><rect x="20" y="879.00" width="9" height="1"/><rect x="20" y="886.25" width="9" height="1.5"/><rect x="29" y="0" width="1" height="894"/></g></svg>
<div class="r" style="left:305px;top:78px;width:29px;height:864px;overflow:hidden"><div class="t" style="left:1px;top:4.9px;font-size:15px;line-height:15px;color:#a6b0c4;transform-origin:0 0;transform:rotate(-90deg)">-3000</div><div class="t" style="left:1px;top:79.9px;font-size:15px;line-height:15px;color:#a6b0c4;transform-origin:0 0;transform:rotate(-90deg)">-2400</div><div class="t" style="left:1px;top:154.9px;font-size:15px;line-height:15px;color:#a6b0c4;transform-origin:0 0;transform:rotate(-90deg)">-1800</div><div class="t" style="left:1px;top:229.9px;font-size:15px;line-height:15px;color:#a6b0c4;transform-origin:0 0;transform:rotate(-90deg)">-1200</div><div class="t" style="left:1px;top:304.9px;font-size:15px;line-height:15px;color:#a6b0c4;transform-origin:0 0;transform:rotate(-90deg)">-600</div><div class="t" style="left:1px;top:379.9px;font-size:15px;line-height:15px;color:#a6b0c4;transform-origin:0 0;transform:rotate(-90deg)">0</div><div class="t" style="left:1px;top:454.9px;font-size:15px;line-height:15px;color:#a6b0c4;transform-origin:0 0;transform:rotate(-90deg)">600</div><div class="t" style="left:1px;top:529.9px;font-size:15px;line-height:15px;color:#a6b0c4;transform-origin:0 0;transform:rotate(-90deg)">1200</div><div class="t" style="left:1px;top:604.9px;font-size:15px;line-height:15px;color:#a6b0c4;transform-origin:0 0;transform:rotate(-90deg)">1800</div><div class="t" style="left:1px;top:679.9px;font-size:15px;line-height:15px;color:#a6b0c4;transform-origin:0 0;transform:rotate(-90deg)">2400</div><div class="t" style="left:1px;top:754.9px;font-size:15px;line-height:15px;color:#a6b0c4;transform-origin:0 0;transform:rotate(-90deg)">3000</div><div class="t" style="left:1px;top:829.9px;font-size:15px;line-height:15px;color:#a6b0c4;transform-origin:0 0;transform:rotate(-90deg)">3600</div></div>
<div class="t" style="left:1131px;top:106px;font-size:15px;line-height:15px;color:#a6b0c4">28</div>
<div class="t" style="left:1187px;top:106px;font-size:15px;line-height:15px;color:#a6b0c4">Su…</div>
<div class="t" style="left:1246px;top:158px;font-size:15px;line-height:15px;color:#a6b0c4">Su…</div>
<div class="t" style="left:1021px;top:219px;font-size:15px;line-height:15px;color:#a6b0c4">Su…</div>
<div class="t" style="left:1076px;top:219px;font-size:15px;line-height:15px;color:#a6b0c4">Su…</div>
<div class="t" style="left:963px;top:276px;font-size:15px;line-height:15px;color:#a6b0c4">Su…</div>
<div class="t" style="left:1021px;top:339px;font-size:15px;line-height:15px;color:#a6b0c4">Su…</div>
<div class="t" style="left:1076px;top:339px;font-size:15px;line-height:15px;color:#a6b0c4">Su…</div>
<div class="t" style="left:1131px;top:339px;font-size:15px;line-height:15px;color:#a6b0c4">Su…</div>
<div class="t" style="left:1187px;top:339px;font-size:15px;line-height:15px;color:#a6b0c4">Su…</div>
<div class="t" style="left:1021px;top:459px;font-size:15px;line-height:15px;color:#a6b0c4">Ho…</div>
<div class="t" style="left:1076px;top:459px;font-size:15px;line-height:15px;color:#a6b0c4">Lo…</div>
<div class="t" style="left:1131px;top:459px;font-size:15px;line-height:15px;color:#a6b0c4">Re…</div>
<div class="t" style="left:1187px;top:459px;font-size:15px;line-height:15px;color:#a6b0c4">Ho…</div>
<div class="t" style="left:1244px;top:391px;font-size:15px;line-height:15px;color:#a6b0c4">No…</div>
<div class="t" style="left:827px;top:437px;font-size:15px;line-height:15px;color:#a6b0c4">No…</div>
<div class="t" style="left:890px;top:437px;font-size:15px;line-height:15px;color:#a6b0c4">set…</div>
<div class="t" style="left:955px;top:437px;font-size:15px;line-height:15px;color:#a6b0c4">Op…</div>
<div class="t" style="left:835px;top:574px;font-size:15px;line-height:15px;color:#a6b0c4">se…</div>
<div class="t" style="left:769px;top:578px;font-size:15px;line-height:15px;color:#a6b0c4">me…</div>
<div class="t" style="left:779px;top:674px;font-size:15px;line-height:15px;color:#a6b0c4">Fa…</div>
<div class="t" style="left:891px;top:674px;font-size:15px;line-height:15px;color:#a6b0c4">Fo…</div>
<div class="t" style="left:803px;top:437px;font-size:15px;line-height:15px;color:#1a9cf2">Ma</div>
<svg style="left:768px;top:430px;" width="24" height="24" viewBox="0 0 24 24"><path transform="translate(-768,-430)" d="M771.5,442 L779.8,434.2 L788.2,442 M774.2,439.8 V450.2 H785.5 V439.8" fill="none" stroke="#1a9cf2" stroke-width="2.6" stroke-linejoin="round"/></svg>
<div class="r" style="left:1131px;top:130px;width:49px;height:106px;background:#f7f7f7;overflow:hidden;"><div class="r" style="left:1.5px;top:1.5px;width:41.2px;height:99.2px;border:2.4px solid #2b2c30;border-radius:7.5px;background:#2b9bc6;overflow:hidden;box-shadow:0 0 0 0.7px #8a8a8e"><div class="r" style="left:0;top:0;width:46px;height:91px;transform:scale(0.8957,1);transform-origin:0 0"><div class="r" style="left:11px;top:6.5px;width:20px;height:3px;background:#6b7b88;border-radius:1px"></div><div class="r" style="left:4.5px;top:13px;width:37px;height:21.5px;background:#ffffff;border-radius:2.5px"></div><div class="r" style="left:6.1px;top:14.6px;width:13.3px;height:18.3px;background:linear-gradient(#7a8a9a,#3a4048);border-radius:1.5px"></div><div class="r" style="left:21.3px;top:16px;width:16.7px;height:0.9px;background:rgba(40,40,40,0.55);"></div><div class="r" style="left:21.3px;top:18px;width:10.02px;height:0.9px;background:rgba(40,40,40,0.55);"></div><div class="r" style="left:22.3px;top:29.0px;width:9.735000000000001px;height:1.1px;background:rgba(30,30,30,0.6);"></div><div class="r" style="left:4.5px;top:37.5px;width:37px;height:21.5px;background:#ffffff;border-radius:2.5px"></div><div class="r" style="left:6.1px;top:39.1px;width:13.3px;height:18.3px;background:linear-gradient(#c07040,#503828);border-radius:1.5px"></div><div class="r" style="left:21.3px;top:40.5px;width:16.7px;height:0.9px;background:rgba(40,40,40,0.55);"></div><div class="r" style="left:21.3px;top:42.5px;width:10.02px;height:0.9px;background:rgba(40,40,40,0.55);"></div><div class="r" style="left:22.3px;top:53.5px;width:9.735000000000001px;height:1.1px;background:rgba(30,30,30,0.6);"></div><div class="r" style="left:4.5px;top:62px;width:37px;height:21.5px;background:#ffffff;border-radius:2.5px"></div><div class="r" style="left:6.1px;top:63.6px;width:13.3px;height:18.3px;background:linear-gradient(#3050a0,#102040);border-radius:1.5px"></div><div class="r" style="left:21.3px;top:65px;width:16.7px;height:0.9px;background:rgba(40,40,40,0.55);"></div><div class="r" style="left:21.3px;top:67px;width:10.02px;height:0.9px;background:rgba(40,40,40,0.55);"></div><div class="r" style="left:22.3px;top:78.0px;width:9.735000000000001px;height:1.1px;background:rgba(30,30,30,0.6);"></div><div class="r" style="left:22px;top:84px;width:10px;height:7px;background:#e8f4f8;border-radius:0 0 2px 2px"></div><div class="r" style="left:18px;top:86px;width:4px;height:5px;background:#4a8a40;"></div></div><div class="r" style="left:12.600000000000001px;top:-1px;width:16px;height:3.2px;background:#2e2f33;border-radius:0 0 3px 3px"></div></div></div>
<div class="r" style="left:1187px;top:130px;width:50px;height:106px;background:#f7f7f7;overflow:hidden;"><div class="r" style="left:1.5px;top:1.5px;width:42.2px;height:99.2px;border:2.4px solid #2b2c30;border-radius:7.5px;background:radial-gradient(ellipse 40% 8% at 70% 6%,rgba(255,255,255,.7),rgba(255,255,255,0)),radial-gradient(ellipse 30% 10% at 30% 14%,rgba(255,255,255,.6),rgba(255,255,255,0)),linear-gradient(180deg,#5a94b8 0%,#a8c8d8 14%,#c8d8d0 26%,#6a7a58 40%,#5a4634 55%,#3a2a1e 80%,#2e2218 100%);overflow:hidden;box-shadow:0 0 0 0.7px #8a8a8e"><div class="r" style="left:0;top:0;width:46px;height:91px;transform:scale(0.9174,1);transform-origin:0 0"><div class="r" style="left:10px;top:7px;width:24px;height:3px;background:#8a8a80;border-radius:1px"></div><div class="r" style="left:4px;top:13.5px;width:36px;height:21px;background:#ffffff;border-radius:2.5px"></div><div class="r" style="left:5.6px;top:15.1px;width:13.0px;height:17.8px;background:linear-gradient(#c8b040,#506030);border-radius:1.5px"></div><div class="r" style="left:20.5px;top:16.5px;width:16.0px;height:0.9px;background:rgba(40,40,40,0.55);"></div><div class="r" style="left:20.5px;top:18.5px;width:9.6px;height:0.9px;background:rgba(40,40,40,0.55);"></div><div class="r" style="left:21.5px;top:29.0px;width:9.350000000000001px;height:1.1px;background:rgba(30,30,30,0.6);"></div><div class="r" style="left:4px;top:38px;width:36px;height:21px;background:#ffffff;border-radius:2.5px"></div><div class="r" style="left:5.6px;top:39.6px;width:13.0px;height:17.8px;background:linear-gradient(#40a0b0,#204838);border-radius:1.5px"></div><div class="r" style="left:20.5px;top:41px;width:16.0px;height:0.9px;background:rgba(40,40,40,0.55);"></div><div class="r" style="left:20.5px;top:43px;width:9.6px;height:0.9px;background:rgba(40,40,40,0.55);"></div><div class="r" style="left:21.5px;top:53.5px;width:9.350000000000001px;height:1.1px;background:rgba(30,30,30,0.6);"></div><div class="r" style="left:4px;top:62.5px;width:36px;height:21px;background:#ffffff;border-radius:2.5px"></div><div class="r" style="left:5.6px;top:64.1px;width:13.0px;height:17.8px;background:linear-gradient(#90c060,#2a3020);border-radius:1.5px"></div><div class="r" style="left:20.5px;top:65.5px;width:16.0px;height:0.9px;background:rgba(40,40,40,0.55);"></div><div class="r" style="left:20.5px;top:67.5px;width:9.6px;height:0.9px;background:rgba(40,40,40,0.55);"></div><div class="r" style="left:21.5px;top:78.0px;width:9.350000000000001px;height:1.1px;background:rgba(30,30,30,0.6);"></div></div><div class="r" style="left:13.100000000000001px;top:-1px;width:16px;height:3.2px;background:#2e2f33;border-radius:0 0 3px 3px"></div></div></div>
<div class="r" style="left:1246px;top:183px;width:49px;height:106px;background:#f7f7f7;overflow:hidden;"><div class="r" style="left:1.5px;top:1.5px;width:41.2px;height:99.2px;border:2.4px solid #2b2c30;border-radius:7.5px;background:linear-gradient(180deg,rgba(40,35,30,.35) 0%,rgba(0,0,0,0) 15%,rgba(40,35,30,.2) 45%,rgba(0,0,0,0) 60%,rgba(40,35,30,.45) 100%),repeating-linear-gradient(125deg,#d6d2ca 0px,#eeebe6 4px,#8e8a84 6px,#cdc8c0 9px,#e2ded8 12px);overflow:hidden;box-shadow:0 0 0 0.7px #8a8a8e"><div class="r" style="left:0;top:0;width:46px;height:91px;transform:scale(0.8957,1);transform-origin:0 0"><div class="r" style="left:10px;top:6px;width:24px;height:3px;background:#7a7268;border-radius:1px"></div><div class="r" style="left:5px;top:11.5px;width:37px;height:21px;background:#ffffff;border-radius:2.5px"></div><div class="r" style="left:6.6px;top:13.1px;width:13.0px;height:17.8px;background:linear-gradient(#8a9aa8,#4a5868);border-radius:1.5px"></div><div class="r" style="left:21.5px;top:14.5px;width:17.0px;height:0.9px;background:rgba(40,40,40,0.55);"></div><div class="r" style="left:21.5px;top:16.5px;width:10.2px;height:0.9px;background:rgba(40,40,40,0.55);"></div><div class="r" style="left:22.5px;top:27.0px;width:9.9px;height:1.1px;background:rgba(30,30,30,0.6);"></div><div class="r" style="left:5px;top:41px;width:37px;height:21px;background:#ffffff;border-radius:2.5px"></div><div class="r" style="left:6.6px;top:42.6px;width:13.0px;height:17.8px;background:linear-gradient(#c05030,#6a3020);border-radius:1.5px"></div><div class="r" style="left:21.5px;top:44px;width:17.0px;height:0.9px;background:rgba(40,40,40,0.55);"></div><div class="r" style="left:21.5px;top:46px;width:10.2px;height:0.9px;background:rgba(40,40,40,0.55);"></div><div class="r" style="left:22.5px;top:56.5px;width:9.9px;height:1.1px;background:rgba(30,30,30,0.6);"></div><div class="r" style="left:5px;top:68px;width:37px;height:21px;background:#ffffff;border-radius:2.5px"></div><div class="r" style="left:6.6px;top:69.6px;width:13.0px;height:17.8px;background:linear-gradient(#7a9a98,#4a6070);border-radius:1.5px"></div><div class="r" style="left:21.5px;top:71px;width:17.0px;height:0.9px;background:rgba(40,40,40,0.55);"></div><div class="r" style="left:21.5px;top:73px;width:10.2px;height:0.9px;background:rgba(40,40,40,0.55);"></div><div class="r" style="left:22.5px;top:83.5px;width:9.9px;height:1.1px;background:rgba(30,30,30,0.6);"></div></div><div class="r" style="left:12.600000000000001px;top:-1px;width:16px;height:3.2px;background:#2e2f33;border-radius:0 0 3px 3px"></div></div></div>
<div class="r" style="left:1021px;top:244px;width:49px;height:106px;background:#f7f7f7;overflow:hidden;"><div class="r" style="left:1px;top:6.5px;width:41.7px;height:90.7px;border:2.4px solid #2b2c30;border-radius:7.5px;background:#23253a;overflow:hidden;box-shadow:0 0 0 0.7px #8a8a8e"><div class="r" style="left:0;top:0;width:46px;height:91px;transform:scale(0.9065,1);transform-origin:0 0"><div class="r" style="left:13.0px;top:12.5px;width:19.0px;height:19.0px;background:radial-gradient(circle at 50% 40%,#e0e0e0 0%,#9a9a9a 35%,#505050 70%,#202020 100%);border-radius:50%;box-shadow:0 0 0 1px #3a3a48"></div><div class="r" style="left:18px;top:23px;width:9px;height:8px;background:#2a2a2a;border-radius:4px 4px 0 0"></div><div class="t" style="left:0;width:46px;text-align:center;top:35.5px;font-size:5.5px;line-height:6px;font-weight:bold;color:#f0f0f4">Unknown</div><div class="r" style="left:16px;top:8px;width:14px;height:0.8px;background:rgba(200,200,210,.35);"></div><div class="r" style="left:9.5px;top:71px;width:8px;height:8px;background:#1fc060;border-radius:50%;"></div><div class="r" style="left:27.5px;top:71px;width:8px;height:8px;background:#e8304a;border-radius:50%;"></div><div class="r" style="left:12px;top:74px;width:3px;height:2px;background:#ffffff;border-radius:1px"></div><div class="r" style="left:30px;top:74.5px;width:3px;height:1.2px;background:#ffffff;"></div></div><div class="r" style="left:12.850000000000001px;top:-1px;width:16px;height:3.2px;background:#2e2f33;border-radius:0 0 3px 3px"></div></div></div>
<div class="r" style="left:1076px;top:244px;width:49px;height:106px;background:#f7f7f7;overflow:hidden;"><div class="r" style="left:2px;top:6.5px;width:41.2px;height:90.7px;border:2.4px solid #2b2c30;border-radius:7.5px;background:linear-gradient(180deg,#8ae8c0 0%,#5ad8c0 60%,#48dcd6 85%,#3ab0e0 100%);overflow:hidden;box-shadow:0 0 0 0.7px #8a8a8e"><div class="r" style="left:0;top:0;width:46px;height:91px;transform:scale(0.8957,1);transform-origin:0 0"><div class="r" style="left:0px;top:0px;width:46px;height:4.5px;background:#f4fbf8;"></div><div class="r" style="left:16px;top:7.5px;width:14px;height:1.2px;background:rgba(40,60,60,.55);"></div><svg style="left:16.5px;top:11.5px;overflow:visible" width="30" height="30"><g transform="scale(1.0)"><circle cx="7" cy="7.5" r="5.6" fill="none" stroke="#101818" stroke-width="1.8" stroke-dasharray="12 5.6" transform="rotate(-20 7 7.5)"/><path d="M2.5,12 L11,3.5 M4.5,13 L12.5,5" stroke="#101818" stroke-width="1.6"/></g></svg><div class="r" style="left:3.5px;top:31.2px;width:2px;height:1.6px;background:rgba(120,60,80,.55);"></div><div class="r" style="left:7px;top:31.5px;width:12px;height:1px;background:rgba(30,40,40,.6);"></div><div class="r" style="left:3.5px;top:34.2px;width:39px;height:0.6px;background:rgba(60,90,80,.35);"></div><div class="r" style="left:3.5px;top:39.2px;width:2px;height:1.6px;background:rgba(120,60,80,.55);"></div><div class="r" style="left:7px;top:39.5px;width:12px;height:1px;background:rgba(30,40,40,.6);"></div><div class="r" style="left:3.5px;top:42.2px;width:39px;height:0.6px;background:rgba(60,90,80,.35);"></div><div class="r" style="left:3.5px;top:47.2px;width:2px;height:1.6px;background:rgba(120,60,80,.55);"></div><div class="r" style="left:7px;top:47.5px;width:12px;height:1px;background:rgba(30,40,40,.6);"></div><div class="r" style="left:3.5px;top:50.2px;width:39px;height:0.6px;background:rgba(60,90,80,.35);"></div><div class="r" style="left:3.5px;top:55.2px;width:2px;height:1.6px;background:rgba(120,60,80,.55);"></div><div class="r" style="left:7px;top:55.5px;width:12px;height:1px;background:rgba(30,40,40,.6);"></div><div class="r" style="left:3.5px;top:58.2px;width:39px;height:0.6px;background:rgba(60,90,80,.35);"></div><svg style="left:11px;top:44px;overflow:visible" width="40" height="40"><g transform="scale(1.0)" fill="none" stroke-linecap="round" stroke-linejoin="round"><path d="M4,27 L17,14" stroke="#707a7a" stroke-width="6.4"/><path d="M4,27 L17,14" stroke="#56d6c0" stroke-width="3.2"/><path d="M15.5,15.5 A6,6 0 1 1 24,7.5 L21,10 L19.5,9 L17.5,11 L18,13" stroke="#707a7a" stroke-width="1.8"/><path d="M8,8 L26,28" stroke="#707a7a" stroke-width="6.4"/><path d="M8,8 L26,28" stroke="#56d6c0" stroke-width="3.2"/><circle cx="4" cy="27" r="1" fill="#707a7a" stroke="none"/><circle cx="5" cy="5" r="2" stroke="#707a7a" stroke-width="1.4"/></g></svg><div class="r" style="left:0px;top:76px;width:46px;height:15px;background:linear-gradient(180deg,#3aa4e4 0%,#a8c8e0 25%,#b8cce0 60%,#98b0c8 100%);"></div></div><div class="r" style="left:12.600000000000001px;top:-1px;width:16px;height:3.2px;background:#2e2f33;border-radius:0 0 3px 3px"></div></div></div>
<div class="r" style="left:1131px;top:244px;width:49px;height:106px;background:#f7f7f7;overflow:hidden;"><div class="r" style="left:1.5px;top:6.5px;width:41.2px;height:90.7px;border:2.4px solid #2b2c30;border-radius:7.5px;background:linear-gradient(180deg,#f2f7fb 0%,#d2e6f4 30%,#7ab4de 60%,#2a86c4 85%,#1a6eb0 100%);overflow:hidden;box-shadow:0 0 0 0.7px #8a8a8e"><div class="r" style="left:0;top:0;width:46px;height:91px;transform:scale(0.8957,1);transform-origin:0 0"><div class="r" style="left:6px;top:9px;width:12px;height:2px;background:rgba(60,70,90,.5);"></div><div class="r" style="left:4px;top:17px;width:36px;height:0.8px;background:rgba(80,90,110,.35);"></div><div class="r" style="left:4px;top:22px;width:36px;height:0.8px;background:rgba(80,90,110,.35);"></div><div class="r" style="left:4px;top:27px;width:36px;height:0.8px;background:rgba(80,90,110,.35);"></div></div><div class="r" style="left:12.600000000000001px;top:-1px;width:16px;height:3.2px;background:#2e2f33;border-radius:0 0 3px 3px"></div></div></div>
<div class="r" style="left:1187px;top:244px;width:50px;height:106px;background:#f7f7f7;overflow:hidden;"><div class="r" style="left:1.5px;top:1.5px;width:42.2px;height:99.2px;border:2.4px solid #2b2c30;border-radius:7.5px;background:linear-gradient(180deg,rgba(30,20,10,.45) 0%,rgba(0,0,0,0) 12%,rgba(30,20,15,.5) 30%,rgba(0,0,0,0) 45%,rgba(20,15,10,.45) 62%,rgba(0,0,0,0) 75%,rgba(30,20,15,.55) 88%,rgba(0,0,0,.1) 100%),repeating-linear-gradient(90deg,#c9bba6 0px,#ddd0bc 3px,#5a4e42 5px,#c4b49e 7px,#b0a08a 10px,#3e342c 12px,#d4c6b2 13px);overflow:hidden;box-shadow:0 0 0 0.7px #8a8a8e"><div class="r" style="left:0;top:0;width:46px;height:91px;transform:scale(0.9174,1);transform-origin:0 0"><div class="r" style="left:10px;top:6px;width:24px;height:3px;background:#6a6258;border-radius:1px"></div><div class="r" style="left:3px;top:12px;width:38px;height:20.5px;background:#ffffff;border-radius:2.5px"></div><div class="r" style="left:4.6px;top:13.6px;width:12px;height:17.3px;background:linear-gradient(#2a6a80,#c8b070 55%,#2a5a70);border-radius:1.5px"></div><div class="r" style="left:18.5px;top:15px;width:19px;height:0.9px;background:rgba(40,40,40,0.55);"></div><div class="r" style="left:18.5px;top:17px;width:11.4px;height:0.9px;background:rgba(40,40,40,0.55);"></div><div class="r" style="left:19.5px;top:27.0px;width:11.0px;height:1.1px;background:rgba(30,30,30,0.6);"></div><div class="r" style="left:3px;top:36px;width:38px;height:20.5px;background:#ffffff;border-radius:2.5px"></div><div class="r" style="left:4.6px;top:37.6px;width:12px;height:17.3px;background:linear-gradient(#f0ece4,#c05050 50%,#e8e4dc);border-radius:1.5px"></div><div class="r" style="left:18.5px;top:39px;width:19px;height:0.9px;background:rgba(40,40,40,0.55);"></div><div class="r" style="left:18.5px;top:41px;width:11.4px;height:0.9px;background:rgba(40,40,40,0.55);"></div><div class="r" style="left:19.5px;top:51.0px;width:11.0px;height:1.1px;background:rgba(30,30,30,0.6);"></div><div class="r" style="left:3px;top:60.5px;width:38px;height:20.5px;background:#ffffff;border-radius:2.5px"></div><div class="r" style="left:4.6px;top:62.1px;width:12px;height:17.3px;background:linear-gradient(#2a6a80,#c8b070 55%,#2a5a70);border-radius:1.5px"></div><div class="r" style="left:18.5px;top:63.5px;width:19px;height:0.9px;background:rgba(40,40,40,0.55);"></div><div class="r" style="left:18.5px;top:65.5px;width:11.4px;height:0.9px;background:rgba(40,40,40,0.55);"></div><div class="r" style="left:19.5px;top:75.5px;width:11.0px;height:1.1px;background:rgba(30,30,30,0.6);"></div></div><div class="r" style="left:13.100000000000001px;top:-1px;width:16px;height:3.2px;background:#2e2f33;border-radius:0 0 3px 3px"></div></div></div>
<div class="r" style="left:963px;top:300px;width:50px;height:106px;background:#f7f7f7;overflow:hidden;"><div class="r" style="left:2px;top:6.5px;width:41.2px;height:89.7px;border:2.4px solid #2b2c30;border-radius:7.5px;background:#101010;overflow:hidden;box-shadow:0 0 0 0.7px #8a8a8e"><div class="r" style="left:0;top:0;width:46px;height:91px;transform:scale(0.8957,1);transform-origin:0 0"><div class="r" style="left:0px;top:0px;width:46px;height:28px;background:linear-gradient(#807460,#a09070);"></div><div class="r" style="left:6px;top:16px;width:34px;height:12px;background:#c4c4c4;border-radius:3px 3px 0 0"></div><div class="r" style="left:18.5px;top:12.5px;width:9.0px;height:9.0px;background:#8a3a3a;border-radius:50%;"></div><div class="r" style="left:0px;top:28px;width:46px;height:70px;background:#101010;"></div><div class="r" style="left:17px;top:32px;width:12px;height:12px;background:#5a2020;border-radius:50%;"></div><div class="r" style="left:25.5px;top:39.5px;width:5.0px;height:5.0px;background:#1fc060;border-radius:50%;"></div><div class="r" style="left:6px;top:52px;width:20px;height:0.9px;background:rgba(200,200,200,.45);"></div><div class="r" style="left:6px;top:58px;width:20px;height:0.9px;background:rgba(200,200,200,.45);"></div><div class="r" style="left:6px;top:64px;width:20px;height:0.9px;background:rgba(200,200,200,.45);"></div><div class="r" style="left:6px;top:70px;width:20px;height:0.9px;background:rgba(200,200,200,.45);"></div></div><div class="r" style="left:12.600000000000001px;top:-1px;width:16px;height:3.2px;background:#2e2f33;border-radius:0 0 3px 3px"></div></div></div>
<div class="r" style="left:1021px;top:364px;width:49px;height:106px;background:#f7f7f7;overflow:hidden;"><div class="r" style="left:2px;top:6.5px;width:41.2px;height:90.2px;border:2.4px solid #2b2c30;border-radius:7.5px;background:#0c0c0c;overflow:hidden;box-shadow:0 0 0 0.7px #8a8a8e"><div class="r" style="left:0;top:0;width:46px;height:91px;transform:scale(0.8957,1);transform-origin:0 0"><div class="r" style="left:0px;top:0px;width:46px;height:40px;background:linear-gradient(#6a6a70,#b8a070 60%,#8a8070);"></div><div class="r" style="left:4px;top:14px;width:38px;height:17px;background:#cfcfcf;border-radius:3px 3px 0 0"></div><div class="r" style="left:18.5px;top:8.5px;width:9.0px;height:9.0px;background:radial-gradient(#c85a5a 10%,#8a2a2a 45%,#2a1010 80%);border-radius:50%;"></div><div class="r" style="left:0px;top:28px;width:46px;height:63px;background:#0c0c0c;"></div><div class="r" style="left:2px;top:30px;width:20px;height:1px;background:rgba(220,220,220,.45);"></div><div class="r" style="left:4px;top:35px;width:8px;height:8px;background:#3a1a1a;border-radius:50%;"></div><div class="r" style="left:18px;top:36px;width:20px;height:0.9px;background:rgba(220,220,220,.4);"></div><div class="r" style="left:18px;top:39px;width:20px;height:0.9px;background:rgba(220,220,220,.4);"></div><div class="r" style="left:18px;top:42px;width:20px;height:0.9px;background:rgba(220,220,220,.4);"></div><div class="r" style="left:1px;top:48px;width:43px;height:1.8px;background:#3a3a3a;"></div><div class="r" style="left:3.5px;top:51.5px;width:5.0px;height:5.0px;background:transparent;border-radius:50%;border:0.8px solid #888;width:4px;height:4px"></div><div class="r" style="left:12.5px;top:51.5px;width:5.0px;height:5.0px;background:#4a8ac0;border-radius:50%;"></div><div class="r" style="left:21.5px;top:51.5px;width:5.0px;height:5.0px;background:#cccccc;border-radius:50%;"></div><div class="r" style="left:2px;top:64px;width:30px;height:2px;background:#2a2a2a;"></div></div><div class="r" style="left:12.600000000000001px;top:-1px;width:16px;height:3.2px;background:#2e2f33;border-radius:0 0 3px 3px"></div></div></div>
<div class="r" style="left:1076px;top:364px;width:49px;height:106px;background:#f7f7f7;overflow:hidden;"><div class="r" style="left:1.5px;top:6.5px;width:41.2px;height:90.2px;border:2.4px solid #2b2c30;border-radius:7.5px;background:#ffffff;overflow:hidden;box-shadow:0 0 0 0.7px #8a8a8e"><div class="r" style="left:0;top:0;width:46px;height:91px;transform:scale(0.8957,1);transform-origin:0 0"><div class="r" style="left:0px;top:0px;width:46px;height:40px;background:linear-gradient(#5a6070,#c0a070 50%,#706050);"></div><div class="r" style="left:3px;top:15px;width:40px;height:40px;background:#ffffff;border-radius:3px 3px 0 0"></div><div class="r" style="left:18px;top:11px;width:10px;height:10px;background:radial-gradient(#c85a5a 10%,#8a2a2a 45%,#2a1010 80%);border-radius:50%;"></div><div class="r" style="left:10px;top:26.0px;width:26px;height:0.9px;background:rgba(60,60,60,.4);"></div><div class="r" style="left:10px;top:28.5px;width:26px;height:0.9px;background:rgba(60,60,60,.4);"></div><div class="r" style="left:12px;top:33px;width:18px;height:4px;background:#2a7ae8;border-radius:2px"></div><div class="r" style="left:6px;top:41px;width:34px;height:0.9px;background:rgba(80,80,80,.35);"></div><div class="r" style="left:6px;top:43px;width:34px;height:0.9px;background:rgba(80,80,80,.35);"></div><div class="r" style="left:0px;top:48px;width:46px;height:1px;background:#f0d0d0;"></div><div class="r" style="left:0px;top:49px;width:46px;height:42px;background:#ffffff;"></div><div class="r" style="left:3px;top:54px;width:8px;height:1.2px;background:rgba(60,60,60,.5);"></div><div class="r" style="left:3px;top:58px;width:19px;height:14px;background:linear-gradient(#a0a0a0,#505050);border-radius:1px"></div><div class="r" style="left:24px;top:58px;width:19px;height:14px;background:radial-gradient(#7a5050,#200808 70%);border-radius:1px"></div><div class="r" style="left:3px;top:74px;width:19px;height:16px;background:linear-gradient(#303848,#801818);border-radius:1px"></div><div class="r" style="left:24px;top:74px;width:19px;height:16px;background:#2a3040;border-radius:1px"></div></div><div class="r" style="left:12.600000000000001px;top:-1px;width:16px;height:3.2px;background:#2e2f33;border-radius:0 0 3px 3px"></div></div></div>
<div class="r" style="left:1131px;top:364px;width:49px;height:106px;background:#f7f7f7;overflow:hidden;"><div class="r" style="left:1.5px;top:6.5px;width:41.2px;height:90.7px;border:2.4px solid #2b2c30;border-radius:7.5px;background:#c6e2bf;overflow:hidden;box-shadow:0 0 0 0.7px #8a8a8e"><div class="r" style="left:0;top:0;width:46px;height:91px;transform:scale(0.8957,1);transform-origin:0 0"><div class="r" style="left:0px;top:0px;width:46px;height:4px;background:#ffffff;"></div><div class="r" style="left:2.3px;top:10.8px;width:4.4px;height:4.4px;background:#e06a70;border-radius:50%;"></div><div class="r" style="left:8.5px;top:11.8px;width:14px;height:0.7px;background:rgba(40,60,40,.35);"></div><div class="r" style="left:8.5px;top:13.600000000000001px;width:30px;height:0.7px;background:rgba(40,60,40,.35);"></div><div class="r" style="left:2.3px;top:18.1px;width:4.4px;height:4.4px;background:#3aa0e0;border-radius:50%;"></div><div class="r" style="left:8.5px;top:19.1px;width:14px;height:0.7px;background:rgba(40,60,40,.35);"></div><div class="r" style="left:8.5px;top:20.900000000000002px;width:30px;height:0.7px;background:rgba(40,60,40,.35);"></div><div class="r" style="left:2.3px;top:25.400000000000002px;width:4.4px;height:4.4px;background:#f08090;border-radius:50%;"></div><div class="r" style="left:8.5px;top:26.4px;width:14px;height:0.7px;background:rgba(40,60,40,.35);"></div><div class="r" style="left:8.5px;top:28.2px;width:30px;height:0.7px;background:rgba(40,60,40,.35);"></div><div class="r" style="left:2.3px;top:32.699999999999996px;width:4.4px;height:4.4px;background:#2a90d0;border-radius:50%;"></div><div class="r" style="left:8.5px;top:33.7px;width:14px;height:0.7px;background:rgba(40,60,40,.35);"></div><div class="r" style="left:8.5px;top:35.5px;width:30px;height:0.7px;background:rgba(40,60,40,.35);"></div><div class="r" style="left:2.3px;top:40.0px;width:4.4px;height:4.4px;background:#f0a0a0;border-radius:50%;"></div><div class="r" style="left:8.5px;top:41.0px;width:14px;height:0.7px;background:rgba(40,60,40,.35);"></div><div class="r" style="left:8.5px;top:42.8px;width:30px;height:0.7px;background:rgba(40,60,40,.35);"></div><div class="r" style="left:2.3px;top:47.3px;width:4.4px;height:4.4px;background:#4090d0;border-radius:50%;"></div><div class="r" style="left:8.5px;top:48.3px;width:14px;height:0.7px;background:rgba(40,60,40,.35);"></div><div class="r" style="left:8.5px;top:50.099999999999994px;width:30px;height:0.7px;background:rgba(40,60,40,.35);"></div><div class="r" style="left:2.3px;top:54.599999999999994px;width:4.4px;height:4.4px;background:#e070a0;border-radius:50%;"></div><div class="r" style="left:8.5px;top:55.599999999999994px;width:14px;height:0.7px;background:rgba(40,60,40,.35);"></div><div class="r" style="left:8.5px;top:57.39999999999999px;width:30px;height:0.7px;background:rgba(40,60,40,.35);"></div><div class="r" style="left:2.3px;top:61.89999999999999px;width:4.4px;height:4.4px;background:#f09090;border-radius:50%;"></div><div class="r" style="left:8.5px;top:62.900000000000006px;width:14px;height:0.7px;background:rgba(40,60,40,.35);"></div><div class="r" style="left:8.5px;top:64.7px;width:30px;height:0.7px;background:rgba(40,60,40,.35);"></div><div class="r" style="left:0px;top:85px;width:46px;height:8px;background:#ffffff;"></div></div><div class="r" style="left:12.600000000000001px;top:-1px;width:16px;height:3.2px;background:#2e2f33;border-radius:0 0 3px 3px"></div></div></div>
<div class="r" style="left:1187px;top:364px;width:50px;height:106px;background:#f7f7f7;overflow:hidden;"><div class="r" style="left:1.5px;top:6.5px;width:42.2px;height:90.7px;border:2.4px solid #2b2c30;border-radius:7.5px;background:repeating-linear-gradient(90deg,#2f2924 0px,#3c352e 2px,#262120 4px,#3a322b 6px);overflow:hidden;box-shadow:0 0 0 0.7px #8a8a8e"><div class="r" style="left:0;top:0;width:46px;height:91px;transform:scale(0.9174,1);transform-origin:0 0"><div class="r" style="left:10px;top:4px;width:26px;height:3px;background:#dcdcdc;border-radius:1px"></div><div class="r" style="left:0px;top:0px;width:10px;height:8px;background:#2a6a30;border-radius:0 0 8px 0"></div><div class="r" style="left:3.5px;top:10.5px;width:38px;height:18px;background:#ffffff;border-radius:2.5px"></div><div class="r" style="left:5.1px;top:12.1px;width:11px;height:14.8px;background:linear-gradient(#8ad0f0,#c05040);border-radius:1.5px"></div><div class="r" style="left:18.0px;top:13.5px;width:20px;height:0.9px;background:rgba(40,40,40,0.55);"></div><div class="r" style="left:18.0px;top:15.5px;width:12.0px;height:0.9px;background:rgba(40,40,40,0.55);"></div><div class="r" style="left:19.0px;top:23.0px;width:11.55px;height:1.1px;background:rgba(30,30,30,0.6);"></div><div class="r" style="left:3.5px;top:30px;width:38px;height:18px;background:#ffffff;border-radius:2.5px"></div><div class="r" style="left:5.1px;top:31.6px;width:11px;height:14.8px;background:linear-gradient(#f8d0a0,#c07040);border-radius:1.5px"></div><div class="r" style="left:18.0px;top:33px;width:20px;height:0.9px;background:rgba(40,40,40,0.55);"></div><div class="r" style="left:18.0px;top:35px;width:12.0px;height:0.9px;background:rgba(40,40,40,0.55);"></div><div class="r" style="left:19.0px;top:42.5px;width:11.55px;height:1.1px;background:rgba(30,30,30,0.6);"></div><div class="r" style="left:3.5px;top:51.5px;width:38px;height:18px;background:#ffffff;border-radius:2.5px"></div><div class="r" style="left:5.1px;top:53.1px;width:11px;height:14.8px;background:linear-gradient(#8ad0f0,#c05040);border-radius:1.5px"></div><div class="r" style="left:18.0px;top:54.5px;width:20px;height:0.9px;background:rgba(40,40,40,0.55);"></div><div class="r" style="left:18.0px;top:56.5px;width:12.0px;height:0.9px;background:rgba(40,40,40,0.55);"></div><div class="r" style="left:19.0px;top:64.0px;width:11.55px;height:1.1px;background:rgba(30,30,30,0.6);"></div><div class="r" style="left:-3px;top:76px;width:14px;height:14px;background:#3a7a34;border-radius:50%"></div><div class="r" style="left:10px;top:82px;width:12px;height:8px;background:#2e6a2e;border-radius:50%"></div><div class="r" style="left:20px;top:84px;width:6px;height:5px;background:#a82828;border-radius:50%"></div><div class="r" style="left:26px;top:80px;width:9px;height:9px;background:#3a7a34;border-radius:50%"></div><div class="r" style="left:36px;top:79px;width:8px;height:11px;background:#d8c898;border-radius:2px"></div></div><div class="r" style="left:13.100000000000001px;top:-1px;width:16px;height:3.2px;background:#2e2f33;border-radius:0 0 3px 3px"></div></div></div>
<div class="r" style="left:1243px;top:415px;width:50px;height:106px;background:#f7f7f7;overflow:hidden;"><div class="r" style="left:2px;top:6.5px;width:41.7px;height:90.7px;border:2.4px solid #2b2c30;border-radius:7.5px;background:linear-gradient(180deg,#20c8ee 0%,#22b4d8 50%,#2a9cc4 100%);overflow:hidden;box-shadow:0 0 0 0.7px #8a8a8e"><div class="r" style="left:0;top:0;width:46px;height:91px;transform:scale(0.9065,1);transform-origin:0 0"><div class="r" style="left:0px;top:0px;width:46px;height:4px;background:#f4f8fa;"></div><div class="r" style="left:0px;top:4px;width:46px;height:5px;background:#20b8e0;"></div><div class="r" style="left:2.5px;top:13px;width:40px;height:7px;background:#b8ecd0;border-radius:2px"></div><div class="r" style="left:4.6px;top:14.1px;width:2.8px;height:2.8px;background:#d86a6a;border-radius:50%;"></div><div class="r" style="left:2.5px;top:22.5px;width:40px;height:7px;background:#b8ecd0;border-radius:2px"></div><div class="r" style="left:4.6px;top:23.6px;width:2.8px;height:2.8px;background:#d86a6a;border-radius:50%;"></div><div class="r" style="left:2.5px;top:31.5px;width:40px;height:7px;background:#b8ecd0;border-radius:2px"></div><div class="r" style="left:4.6px;top:32.6px;width:2.8px;height:2.8px;background:#d86a6a;border-radius:50%;"></div><svg style="left:0px;top:46px" width="46" height="34"><g fill="none" stroke="#6e7a80" stroke-width="2.2"><rect x="1.5" y="2" width="6" height="6"/><rect x="25" y="2" width="6" height="6"/><rect x="1.5" y="24" width="6" height="6"/><rect x="25" y="24" width="6" height="6"/><rect x="37" y="12" width="6" height="6"/><path d="M7.5,5 H25 M4.5,8 V24 M7.5,27 H25 M28,8 V24 M31,15 H37 M40,18 V34 M16,27 V34"/></g></svg><div class="r" style="left:0px;top:79px;width:46px;height:12px;background:linear-gradient(#e8e8ea,#f0dcdc);"></div></div><div class="r" style="left:12.850000000000001px;top:-1px;width:16px;height:3.2px;background:#2e2f33;border-radius:0 0 3px 3px"></div></div></div>
<div class="r" style="left:1021px;top:484px;width:49px;height:106px;background:#f7f7f7;overflow:hidden;"><div class="r" style="left:1.5px;top:5.5px;width:41.2px;height:90.7px;border:2.4px solid #2b2c30;border-radius:7.5px;background:#eef9fc;overflow:hidden;box-shadow:0 0 0 0.7px #8a8a8e"><div class="r" style="left:0;top:0;width:46px;height:91px;transform:scale(0.8957,1);transform-origin:0 0"><div class="r" style="left:3px;top:3px;width:4px;height:3px;background:#60b0d0;"></div><svg style="left:9px;top:20px" width="30" height="30"><circle cx="14" cy="15" r="10.5" fill="none" stroke="#101010" stroke-width="2.8" stroke-dasharray="24 9" transform="rotate(-20 14 15)"/><path d="M5,24 L22,7 M9,26 L24,11" stroke="#101010" stroke-width="2.6"/><path d="M18,5 L26,3 L24,11 Z M10,22 L7,29 L14,27 Z" fill="#101010"/></svg><div class="r" style="left:16px;top:52px;width:14px;height:2px;background:#2a2a2a;"></div><div class="r" style="left:5px;top:66px;width:36px;height:5px;background:#3a90c8;border-radius:1.5px"></div></div><div class="r" style="left:12.600000000000001px;top:-1px;width:16px;height:3.2px;background:#2e2f33;border-radius:0 0 3px 3px"></div></div></div>
<div class="r" style="left:1076px;top:484px;width:49px;height:106px;background:#f7f7f7;overflow:hidden;"><div class="r" style="left:1.5px;top:5.5px;width:41.2px;height:90.7px;border:2.4px solid #2b2c30;border-radius:7.5px;background:#fbf4f3;overflow:hidden;box-shadow:0 0 0 0.7px #8a8a8e"><div class="r" style="left:0;top:0;width:46px;height:91px;transform:scale(0.8957,1);transform-origin:0 0"><div class="r" style="left:4px;top:12px;width:26px;height:2px;background:#2a3a80;"></div><div class="r" style="left:4px;top:17px;width:30px;height:0.7px;background:rgba(80,80,90,.35);"></div><div class="r" style="left:4px;top:19px;width:30px;height:0.7px;background:rgba(80,80,90,.35);"></div><div class="r" style="left:4px;top:25px;width:38px;height:3px;background:#ffffff;border:0.5px solid #d0d0d8"></div><div class="r" style="left:4px;top:34px;width:38px;height:3px;background:#ffffff;border:0.5px solid #d0d0d8"></div><div class="r" style="left:4px;top:46px;width:38px;height:4.5px;background:#1a2a8a;border-radius:1px"></div><div class="r" style="left:16px;top:61px;width:5px;height:5px;background:#3a5aa8;border-radius:1px"></div><div class="r" style="left:25px;top:61.5px;width:4px;height:4px;background:#e8c040;border-radius:50%;"></div></div><div class="r" style="left:12.600000000000001px;top:-1px;width:16px;height:3.2px;background:#2e2f33;border-radius:0 0 3px 3px"></div></div></div>
<div class="r" style="left:1131px;top:484px;width:49px;height:106px;background:#f7f7f7;overflow:hidden;"><div class="r" style="left:1.5px;top:5.5px;width:41.2px;height:90.7px;border:2.4px solid #2b2c30;border-radius:7.5px;background:#f0f1f5;overflow:hidden;box-shadow:0 0 0 0.7px #8a8a8e"><div class="r" style="left:0;top:0;width:46px;height:91px;transform:scale(0.8957,1);transform-origin:0 0"><div class="r" style="left:4px;top:12px;width:26px;height:2px;background:#2a3a80;"></div><div class="r" style="left:4px;top:17px;width:30px;height:0.7px;background:rgba(80,80,90,.35);"></div><div class="r" style="left:4px;top:19px;width:30px;height:0.7px;background:rgba(80,80,90,.35);"></div><div class="r" style="left:4px;top:24px;width:36px;height:3px;background:#ffffff;"></div><div class="r" style="left:4px;top:32px;width:36px;height:3px;background:#ffffff;"></div><div class="r" style="left:4px;top:40px;width:36px;height:3px;background:#ffffff;"></div><div class="r" style="left:5px;top:51px;width:38px;height:4.5px;background:#1a2a8a;border-radius:1px"></div><div class="r" style="left:16px;top:66px;width:5px;height:5px;background:#3a5aa8;border-radius:1px"></div><div class="r" style="left:25px;top:66.5px;width:4px;height:4px;background:#e8c040;border-radius:50%;"></div></div><div class="r" style="left:12.600000000000001px;top:-1px;width:16px;height:3.2px;background:#2e2f33;border-radius:0 0 3px 3px"></div></div></div>
<div class="r" style="left:1187px;top:484px;width:50px;height:106px;background:#f7f7f7;overflow:hidden;"><div class="r" style="left:2px;top:5.5px;width:41.7px;height:90.7px;border:2.4px solid #2b2c30;border-radius:7.5px;background:#ffffff;overflow:hidden;box-shadow:0 0 0 0.7px #8a8a8e"><div class="r" style="left:0;top:0;width:46px;height:91px;transform:scale(0.9065,1);transform-origin:0 0"><div class="r" style="left:0.5px;top:8.5px;width:7.0px;height:7.0px;background:#7a2a2a;border-radius:50%;"></div><div class="r" style="left:9px;top:10px;width:20px;height:0.9px;background:rgba(40,40,40,.45);"></div><div class="r" style="left:9px;top:12px;width:20px;height:0.9px;background:rgba(40,40,40,.45);"></div><div class="r" style="left:38.8px;top:2.3px;width:4.4px;height:4.4px;background:#40b8a0;border-radius:50%;"></div><div class="r" style="left:1px;top:17px;width:20px;height:11px;background:linear-gradient(90deg,#f8a030,#f05a2a);"></div><div class="r" style="left:23px;top:17px;width:22px;height:11px;background:linear-gradient(90deg,#2a5a8a,#c0c8d0);"></div><div class="r" style="left:2px;top:34px;width:42px;height:3px;background:#f4eeee;border-radius:2px;border:0.5px solid #ddd"></div><div class="r" style="left:3px;top:44px;width:40px;height:18px;background:#ffffff;box-shadow:0 0 1px #ccc"></div><div class="r" style="left:5px;top:46px;width:10px;height:14px;background:linear-gradient(#d8e8f8,#4a7ac0);"></div><div class="r" style="left:17px;top:56px;width:18px;height:1.5px;background:#1a8cf0;"></div><div class="r" style="left:4px;top:64px;width:38px;height:8px;background:linear-gradient(90deg,#2a8a9a,#f4f4f4);"></div><div class="r" style="left:0px;top:85px;width:46px;height:6px;background:#ffffff;"></div></div><div class="r" style="left:12.850000000000001px;top:-1px;width:16px;height:3.2px;background:#2e2f33;border-radius:0 0 3px 3px"></div></div></div>
<div class="r" style="left:768px;top:461px;width:50px;height:125px;background:#ffffff;overflow:hidden;"><div class="r" style="left:0px;top:0px;width:50px;height:4.5px;background:#f8f8f8;"></div><div class="r" style="left:4px;top:1.5px;width:4px;height:1.2px;background:rgba(40,40,40,.6);"></div><div class="r" style="left:40px;top:1.5px;width:7px;height:1.2px;background:rgba(40,40,40,.6);"></div><div class="r" style="left:1.2999999999999998px;top:6.8px;width:4.4px;height:4.4px;background:transparent;border-radius:50%;border:0.8px solid #555;width:3px;height:3px"></div><div class="r" style="left:8px;top:8.5px;width:12px;height:1.3px;background:rgba(40,40,40,.7);"></div><div class="r" style="left:42px;top:5.5px;width:5px;height:4.5px;background:#3cb0b0;border-radius:1px"></div><div class="r" style="left:1.1000000000000005px;top:12.9px;width:9.2px;height:9.2px;background:radial-gradient(#d05050,#3a1010 70%);border-radius:50%;"></div><div class="r" style="left:11.5px;top:15.5px;width:14px;height:1.4px;background:rgba(40,40,40,.7);"></div><div class="r" style="left:11.5px;top:18.5px;width:17px;height:1px;background:rgba(40,40,40,.55);"></div><div class="r" style="left:43.7px;top:16.7px;width:3.6px;height:3.6px;background:transparent;border-radius:50%;border:0.7px solid #666;width:2.2px;height:2.2px"></div><div class="r" style="left:2px;top:23px;width:13px;height:1.3px;background:#3a5aa0;"></div><div class="r" style="left:44px;top:23px;width:4px;height:0.8px;background:rgba(80,80,80,.4);"></div><div class="r" style="left:1.7px;top:27.5px;width:23.3px;height:13px;background:linear-gradient(90deg,#f05a30,#f8a030);"></div><div class="r" style="left:9.5px;top:31px;width:6px;height:6px;background:#3a4a6a;border-radius:50%;"></div><div class="r" style="left:27px;top:27.5px;width:21px;height:14px;background:linear-gradient(90deg,#2a5a8a 45%,#c4ccd4 50%,#8a9aa8);"></div><div class="r" style="left:2px;top:44px;width:5px;height:0.8px;background:rgba(80,80,80,.4);"></div><div class="r" style="left:28px;top:44px;width:5px;height:0.8px;background:rgba(80,80,80,.4);"></div><div class="r" style="left:1.5px;top:50px;width:45px;height:6.5px;background:#f8f2f2;border-radius:3.5px;border:0.6px solid #d8c8c8;box-sizing:border-box"></div><div class="r" style="left:2.5px;top:63px;width:13px;height:1px;background:#3a5aa0;"></div><div class="r" style="left:40px;top:63px;width:6px;height:0.8px;background:rgba(200,80,80,.5);"></div><div class="r" style="left:2.5px;top:66px;width:44px;height:23.5px;background:#ffffff;border-radius:2.5px;box-shadow:0 0 1.5px #bbb"></div><div class="r" style="left:4.4px;top:67.5px;width:13.6px;height:19.5px;background:linear-gradient(160deg,#dce8f4 30%,#f0c040 45%,#3a6ac0 60%,#dce8f4 75%);border-radius:1.5px"></div><div class="r" style="left:21px;top:69.5px;width:22px;height:0.9px;background:rgba(30,30,30,.65);"></div><div class="r" style="left:21px;top:72.3px;width:12px;height:0.9px;background:rgba(30,30,30,.65);"></div><div class="r" style="left:20.5px;top:84px;width:17px;height:1.6px;background:#1a8cf0;"></div><div class="r" style="left:37.5px;top:84px;width:8px;height:1.6px;background:#e8ecf0;"></div><div class="r" style="left:3.5px;top:91px;width:43px;height:20.5px;background:#ffffff;border-radius:2.5px;box-shadow:0 0 1.5px #bbb"></div><div class="r" style="left:6px;top:92px;width:13px;height:19.5px;background:linear-gradient(#30b0b0,#1a6a80 60%,#e04040);"></div><div class="r" style="left:21.5px;top:94.0px;width:22px;height:0.9px;background:rgba(30,30,30,.65);"></div><div class="r" style="left:21.5px;top:96.8px;width:16px;height:0.9px;background:rgba(30,30,30,.65);"></div><div class="r" style="left:21px;top:108px;width:17px;height:1.6px;background:#1a8cf0;"></div><div class="r" style="left:1px;top:115px;width:48px;height:10px;background:#ffffff;border-radius:4px 4px 0 0;box-shadow:0 -0.5px 1.5px #ccc"></div><div class="r" style="left:7px;top:118px;width:2px;height:2px;background:#3aa0b0;border-radius:50%;"></div><div class="r" style="left:19px;top:118px;width:4px;height:2px;background:rgba(80,80,80,.4);"></div><div class="r" style="left:31px;top:118px;width:4px;height:2px;background:rgba(80,80,80,.4);"></div><div class="r" style="left:42px;top:118px;width:4px;height:2px;background:rgba(80,80,80,.4);"></div></div>
<div class="r" style="left:827px;top:463px;width:49px;height:109.5px;background:linear-gradient(180deg,#1cc6ec 0%,#22b8dc 40%,#2aa2c4 85%);overflow:hidden;"><div class="r" style="left:0px;top:0px;width:49px;height:5.5px;background:#edf0f2;"></div><div class="r" style="left:2.5px;top:14.5px;width:44px;height:9px;background:#ffffff;border-radius:3px"></div><div class="r" style="left:4.1px;top:16.1px;width:2.8px;height:2.8px;background:#d86a4a;border-radius:50%;"></div><div class="r" style="left:8px;top:16.8px;width:12px;height:0.8px;background:rgba(40,40,40,.5);"></div><div class="r" style="left:8px;top:19.3px;width:28px;height:0.8px;background:rgba(40,40,40,.5);"></div><div class="r" style="left:2.5px;top:25.5px;width:44px;height:9px;background:#ffffff;border-radius:3px"></div><div class="r" style="left:4.1px;top:27.1px;width:2.8px;height:2.8px;background:#d86a4a;border-radius:50%;"></div><div class="r" style="left:8px;top:27.8px;width:12px;height:0.8px;background:rgba(40,40,40,.5);"></div><div class="r" style="left:8px;top:30.3px;width:28px;height:0.8px;background:rgba(40,40,40,.5);"></div><div class="r" style="left:2.5px;top:36px;width:44px;height:9px;background:#ffffff;border-radius:3px"></div><div class="r" style="left:4.1px;top:37.6px;width:2.8px;height:2.8px;background:#d86a4a;border-radius:50%;"></div><div class="r" style="left:8px;top:38.3px;width:12px;height:0.8px;background:rgba(40,40,40,.5);"></div><div class="r" style="left:8px;top:40.8px;width:28px;height:0.8px;background:rgba(40,40,40,.5);"></div><div class="r" style="left:2.5px;top:48.5px;width:44px;height:8.5px;background:#ffffff;border-radius:3px"></div><div class="r" style="left:4.1px;top:50.1px;width:2.8px;height:2.8px;background:#d86a4a;border-radius:50%;"></div><div class="r" style="left:8px;top:50.8px;width:12px;height:0.8px;background:rgba(40,40,40,.5);"></div><div class="r" style="left:8px;top:53.3px;width:28px;height:0.8px;background:rgba(40,40,40,.5);"></div><svg style="left:0;top:60px" width="49" height="35"><g fill="none" stroke="#6e7a82" stroke-width="2.8"><rect x="1.5" y="1.5" width="8" height="8"/><rect x="26.5" y="1.5" width="8" height="8"/><rect x="1.5" y="24.5" width="8" height="8"/><rect x="26.5" y="24.5" width="8" height="8"/><rect x="38" y="12.5" width="8" height="8"/><path d="M9.5,5.5 H26.5 M5.5,9.5 V24.5 M9.5,28.5 H26.5 M30.5,9.5 V24.5 M34.5,16.5 H38 M42,20.5 V35 M17.5,28.5 V35"/></g></svg><div class="r" style="left:0px;top:94px;width:49px;height:5.5px;background:#e6e2e4;"></div><div class="r" style="left:0px;top:99.5px;width:49px;height:10px;background:#f0dede;"></div><div class="r" style="left:15px;top:7.8px;width:19px;height:1.2px;background:rgba(40,60,80,.55);"></div><div class="r" style="left:3px;top:1.8px;width:4px;height:1.2px;background:rgba(40,40,40,.6);"></div><div class="r" style="left:40px;top:1.8px;width:7px;height:1.2px;background:rgba(40,40,40,.6);"></div><svg style="left:0;top:0" width="49" height="14"><path d="M8,6 L5.5,8 L8,10" stroke="#3a5a70" stroke-width="0.8" fill="none"/><path d="M46,11 H43 V8 Q44.5,5.5 46,8 Z" stroke="#3a5a70" stroke-width="0.8" fill="none"/></svg><div class="r" style="left:19px;top:101px;width:11px;height:0.8px;background:rgba(40,40,40,.45);"></div></div>
<div class="r" style="left:890px;top:463px;width:49px;height:106px;background:linear-gradient(180deg,#8aeac8 0%,#70e0bc 35%,#4cd4b0 60%,#4ee0d4 80%,#52e0e0 100%);overflow:hidden;"><div class="r" style="left:0px;top:0px;width:49px;height:5.5px;background:#f2f6f4;"></div><div class="r" style="left:2px;top:1.5px;width:4px;height:1.2px;background:rgba(40,40,40,.5);"></div><div class="r" style="left:40px;top:1.5px;width:7px;height:1.2px;background:rgba(40,40,40,.5);"></div><div class="r" style="left:17px;top:9px;width:15px;height:1.4px;background:rgba(40,60,60,.55);"></div><div class="r" style="left:41.8px;top:7.8px;width:4.4px;height:4.4px;background:transparent;border-radius:50%;border:0.8px solid #5a7a70;width:3px;height:3px"></div><svg style="left:17.5px;top:14.5px;overflow:visible" width="30" height="30"><g transform="scale(1.0)"><circle cx="7" cy="7.5" r="5.6" fill="none" stroke="#101818" stroke-width="1.8" stroke-dasharray="12 5.6" transform="rotate(-20 7 7.5)"/><path d="M2.5,12 L11,3.5 M4.5,13 L12.5,5" stroke="#101818" stroke-width="1.6"/></g></svg><div class="r" style="left:4px;top:36.2px;width:2px;height:1.6px;background:rgba(120,60,80,.55);"></div><div class="r" style="left:7.5px;top:36.5px;width:12px;height:1px;background:rgba(30,40,40,.6);"></div><div class="r" style="left:4px;top:39.2px;width:41px;height:0.6px;background:rgba(60,90,80,.35);"></div><div class="r" style="left:4px;top:44.400000000000006px;width:2px;height:1.6px;background:rgba(120,60,80,.55);"></div><div class="r" style="left:7.5px;top:44.7px;width:12px;height:1px;background:rgba(30,40,40,.6);"></div><div class="r" style="left:4px;top:47.400000000000006px;width:41px;height:0.6px;background:rgba(60,90,80,.35);"></div><div class="r" style="left:4px;top:52.6px;width:2px;height:1.6px;background:rgba(120,60,80,.55);"></div><div class="r" style="left:7.5px;top:52.9px;width:12px;height:1px;background:rgba(30,40,40,.6);"></div><div class="r" style="left:4px;top:55.6px;width:41px;height:0.6px;background:rgba(60,90,80,.35);"></div><div class="r" style="left:4px;top:60.8px;width:2px;height:1.6px;background:rgba(120,60,80,.55);"></div><div class="r" style="left:7.5px;top:61.099999999999994px;width:12px;height:1px;background:rgba(30,40,40,.6);"></div><div class="r" style="left:4px;top:63.8px;width:41px;height:0.6px;background:rgba(60,90,80,.35);"></div><svg style="left:12px;top:48px;overflow:visible" width="40" height="40"><g transform="scale(1.0)" fill="none" stroke-linecap="round" stroke-linejoin="round"><path d="M4,27 L17,14" stroke="#707a7a" stroke-width="6.4"/><path d="M4,27 L17,14" stroke="#58d8c0" stroke-width="3.2"/><path d="M15.5,15.5 A6,6 0 1 1 24,7.5 L21,10 L19.5,9 L17.5,11 L18,13" stroke="#707a7a" stroke-width="1.8"/><path d="M8,8 L26,28" stroke="#707a7a" stroke-width="6.4"/><path d="M8,8 L26,28" stroke="#58d8c0" stroke-width="3.2"/><circle cx="4" cy="27" r="1" fill="#707a7a" stroke="none"/><circle cx="5" cy="5" r="2" stroke="#707a7a" stroke-width="1.4"/></g></svg><div class="r" style="left:0px;top:83.5px;width:49px;height:22.5px;background:linear-gradient(180deg,#3aa4e4 0%,#8ab8e0 12%,#b8cce0 40%,#a8b8cc 100%);"></div><div class="r" style="left:20px;top:94px;width:10px;height:0.8px;background:rgba(40,40,40,.5);"></div></div>
<div class="r" style="left:955px;top:463px;width:35px;height:78.5px;background:linear-gradient(180deg,#50e0a4 0%,#38d888 40%,#20c858 70%,#18c04c 100%);overflow:hidden;"><div class="r" style="left:34px;top:0px;width:1px;height:78.5px;background:#d8e0e0;"></div><div class="r" style="left:3px;top:2.0px;width:3px;height:0.9px;background:rgba(255,255,255,.6);"></div><div class="r" style="left:3.4px;top:5.9px;width:3.2px;height:3.2px;background:transparent;border-radius:50%;border:0.7px solid rgba(255,255,255,.5);width:2px;height:2px"></div><div class="r" style="left:9px;top:7px;width:16px;height:1.4px;background:rgba(255,255,255,.35);"></div><div class="r" style="left:3.4px;top:12.9px;width:3.2px;height:3.2px;background:transparent;border-radius:50%;border:0.7px solid rgba(255,255,255,.5);width:2px;height:2px"></div><div class="r" style="left:9px;top:14px;width:22px;height:1.4px;background:rgba(255,255,255,.35);"></div><div class="r" style="left:3.4px;top:20.9px;width:3.2px;height:3.2px;background:transparent;border-radius:50%;border:0.7px solid rgba(255,255,255,.5);width:2px;height:2px"></div><div class="r" style="left:9px;top:22px;width:14px;height:1.4px;background:rgba(255,255,255,.35);"></div></div>
<div class="r" style="left:955px;top:552px;width:49px;height:106px;background:linear-gradient(180deg,#f6f9fc 0%,#d0e2f2 35%,#8ab8de 60%,#2a7ec0 80%,#1a6aa8 92%,#2a78ae 100%);overflow:hidden;"><div class="r" style="left:8.6px;top:6.6px;width:4.8px;height:4.8px;background:#444a55;border-radius:50%;"></div><div class="r" style="left:15px;top:8.5px;width:10px;height:1px;background:rgba(40,40,40,.6);"></div><div class="r" style="left:3px;top:15.0px;width:40px;height:0.7px;background:rgba(60,70,90,.35);"></div><div class="r" style="left:3px;top:21.3px;width:40px;height:0.7px;background:rgba(60,70,90,.35);"></div><div class="r" style="left:3px;top:27.6px;width:40px;height:0.7px;background:rgba(60,70,90,.35);"></div></div>
<div class="r" style="left:765px;top:602px;width:56px;height:56px;background:#ffffff;overflow:hidden;border-radius:0 0 5px 5px"><div class="r" style="left:0px;top:0px;width:56px;height:28px;background:linear-gradient(160deg,#b8e0d8 0%,#c8e8e0 22%,#f4faf8 28%,#c4e6de 34%,#6ac2c2 48%,#5ab8b8 100%);"></div><div class="r" style="left:0px;top:19px;width:56px;height:8px;background:linear-gradient(90deg,#f2b6b6 58%,#c8e8e0 58%);"></div><svg style="left:0;top:0" width="56" height="30"><polygon points="0,14.5 14,13.5 22,15 29,18 30,24 25,27 14,26.5 0,25" fill="#6e6e6e"/><polygon points="56,11 44,11.5 35,13.5 27,17 26.5,23 31,25.5 42,23.5 56,21.5" fill="#8a8a8a"/><path d="M22,16 Q26,19 25,25 M33,15 Q30,19 31,24" stroke="#3a3a3a" stroke-width="1" fill="none"/><path d="M2,2 L7,7 M7,2 L2,7" stroke="#505050" stroke-width="0.9"/></svg><div class="r" style="left:0px;top:27px;width:56px;height:7px;background:#f8eeee;"></div><div class="r" style="left:6px;top:30px;width:44px;height:1.4px;background:rgba(40,40,40,.7);"></div><div class="r" style="left:0px;top:34px;width:56px;height:4px;background:#d4e2ee;"></div><div class="r" style="left:0px;top:38px;width:56px;height:18.5px;background:linear-gradient(#2a78b8,#1a5a9a);"></div><div class="r" style="left:8.5px;top:40.5px;width:39.5px;height:12.5px;background:#0b3a7c;border-radius:4px"></div><div class="r" style="left:20px;top:46px;width:16px;height:1.3px;background:#d8e0f0;"></div></div>
<div class="r" style="left:835px;top:599px;width:49px;height:102px;background:linear-gradient(180deg,#d8eaf6,#c4dcee 60%,#d0e4f2);overflow:hidden;"><div class="r" style="left:0px;top:0px;width:49px;height:7.5px;background:#7eaab8;"></div><div class="r" style="left:2px;top:2px;width:28px;height:3px;background:rgba(40,60,70,.6);"></div><div class="r" style="left:0px;top:7.5px;width:49px;height:13px;background:#ffffff;border-radius:0 0 3px 3px"></div><div class="r" style="left:2px;top:9.5px;width:15px;height:2.5px;background:#f4e4e4;border:0.4px solid #c8a8a8"></div><div class="r" style="left:20px;top:9.5px;width:11px;height:2.5px;background:#f4e4e4;border:0.4px solid #c8a8a8"></div><div class="r" style="left:2px;top:14px;width:12px;height:2.5px;background:#f4e4e4;border:0.4px solid #c8a8a8"></div><div class="r" style="left:17px;top:14px;width:12px;height:2.5px;background:#f4e4e4;border:0.4px solid #c8a8a8"></div><div class="r" style="left:32px;top:14px;width:12px;height:2.5px;background:#f4e4e4;border:0.4px solid #c8a8a8"></div><div class="r" style="left:3px;top:22.5px;width:42.5px;height:21px;background:#ffffff;border-radius:2.5px"></div><div class="r" style="left:4.6px;top:24.1px;width:13px;height:17.8px;background:linear-gradient(160deg,#dce8f4 30%,#f0c040 45%,#3a6ac0 60%,#dce8f4 75%);border-radius:1.5px"></div><div class="r" style="left:19.5px;top:25.5px;width:22.5px;height:0.9px;background:rgba(40,40,40,0.55);"></div><div class="r" style="left:19.5px;top:27.5px;width:13.5px;height:0.9px;background:rgba(40,40,40,0.55);"></div><div class="r" style="left:19.5px;top:38.5px;width:15.275px;height:1.4px;background:#1a8cf0;"></div><div class="r" style="left:34.775px;top:38.5px;width:7.05px;height:1.4px;background:#e4e8ee;"></div><div class="r" style="left:3px;top:50px;width:42.5px;height:21.5px;background:#ffffff;border-radius:2.5px"></div><div class="r" style="left:4.6px;top:51.6px;width:13px;height:18.3px;background:linear-gradient(#30b0b0,#1a6a80 60%,#e04040);border-radius:1.5px"></div><div class="r" style="left:19.5px;top:53px;width:22.5px;height:0.9px;background:rgba(40,40,40,0.55);"></div><div class="r" style="left:19.5px;top:55px;width:13.5px;height:0.9px;background:rgba(40,40,40,0.55);"></div><div class="r" style="left:19.5px;top:66.5px;width:15.275px;height:1.4px;background:#1a8cf0;"></div><div class="r" style="left:34.775px;top:66.5px;width:7.05px;height:1.4px;background:#e4e8ee;"></div><div class="r" style="left:3px;top:77px;width:42.5px;height:24px;background:#ffffff;border-radius:2.5px"></div><div class="r" style="left:4.6px;top:78.6px;width:13px;height:20.8px;background:linear-gradient(135deg,#8a9a80,#d8b890 50%,#2a6a40);border-radius:1.5px"></div><div class="r" style="left:19.5px;top:80px;width:22.5px;height:0.9px;background:rgba(40,40,40,0.55);"></div><div class="r" style="left:19.5px;top:82px;width:13.5px;height:0.9px;background:rgba(40,40,40,0.55);"></div><div class="r" style="left:19.5px;top:96px;width:15.275px;height:1.4px;background:#1a8cf0;"></div><div class="r" style="left:34.775px;top:96px;width:7.05px;height:1.4px;background:#e4e8ee;"></div></div>
<div class="r" style="left:778px;top:699px;width:50px;height:105.5px;background:linear-gradient(180deg,rgba(30,20,10,.45) 0%,rgba(0,0,0,0) 12%,rgba(30,20,15,.5) 30%,rgba(0,0,0,0) 45%,rgba(20,15,10,.45) 62%,rgba(0,0,0,0) 75%,rgba(30,20,15,.55) 88%,rgba(0,0,0,.1) 100%),repeating-linear-gradient(90deg,#c9bba6 0px,#ddd0bc 3px,#5a4e42 5px,#c4b49e 7px,#b0a08a 10px,#3e342c 12px,#d4c6b2 13px);overflow:hidden;"><div class="r" style="left:14px;top:5px;width:18px;height:2.5px;background:#e8e4e0;border-radius:1px"></div><div class="r" style="left:3.8px;top:12.4px;width:42.7px;height:22px;background:#ffffff;border-radius:2.5px"></div><div class="r" style="left:5.4px;top:14.0px;width:13px;height:18.8px;background:linear-gradient(#3a7a88,#c8b078 60%,#2a5a68);border-radius:1.5px"></div><div class="r" style="left:20.3px;top:15.4px;width:22.700000000000003px;height:0.9px;background:rgba(40,40,40,0.55);"></div><div class="r" style="left:20.3px;top:17.4px;width:13.620000000000001px;height:0.9px;background:rgba(40,40,40,0.55);"></div><div class="r" style="left:21.3px;top:28.9px;width:13.035000000000002px;height:1.1px;background:rgba(30,30,30,0.6);"></div><div class="r" style="left:3.8px;top:38.7px;width:42.7px;height:22px;background:#ffffff;border-radius:2.5px"></div><div class="r" style="left:5.4px;top:40.300000000000004px;width:13px;height:18.8px;background:linear-gradient(#f0e8e0,#c04a40 50%,#e8e0d8);border-radius:1.5px"></div><div class="r" style="left:20.3px;top:41.7px;width:22.700000000000003px;height:0.9px;background:rgba(40,40,40,0.55);"></div><div class="r" style="left:20.3px;top:43.7px;width:13.620000000000001px;height:0.9px;background:rgba(40,40,40,0.55);"></div><div class="r" style="left:21.3px;top:55.2px;width:13.035000000000002px;height:1.1px;background:rgba(30,30,30,0.6);"></div><div class="r" style="left:3.8px;top:64.3px;width:42.7px;height:22px;background:#ffffff;border-radius:2.5px"></div><div class="r" style="left:5.4px;top:65.89999999999999px;width:13px;height:18.8px;background:linear-gradient(#3a7a88,#c8b078 60%,#2a5a68);border-radius:1.5px"></div><div class="r" style="left:20.3px;top:67.3px;width:22.700000000000003px;height:0.9px;background:rgba(40,40,40,0.55);"></div><div class="r" style="left:20.3px;top:69.3px;width:13.620000000000001px;height:0.9px;background:rgba(40,40,40,0.55);"></div><div class="r" style="left:21.3px;top:80.8px;width:13.035000000000002px;height:1.1px;background:rgba(30,30,30,0.6);"></div></div>
<div class="r" style="left:835px;top:711px;width:49px;height:106.3px;background:linear-gradient(180deg,rgba(40,35,30,.5) 0%,rgba(0,0,0,.1) 20%,rgba(40,35,30,.25) 50%,rgba(0,0,0,.05) 65%,rgba(40,35,30,.5) 100%),repeating-linear-gradient(125deg,#bab6ae 0px,#d8d4ce 4px,#7e7a74 6px,#b4b0a8 9px,#ccc8c2 12px);overflow:hidden;"><div class="r" style="left:14px;top:7px;width:18px;height:2.5px;background:#8a8a88;border-radius:1px"></div><div class="r" style="left:3.6px;top:12px;width:42.6px;height:22.2px;background:#ffffff;border-radius:2.5px"></div><div class="r" style="left:5.2px;top:13.6px;width:13px;height:19.0px;background:linear-gradient(#8aa0b0,#4a6070);border-radius:1.5px"></div><div class="r" style="left:20.1px;top:15px;width:22.6px;height:0.9px;background:rgba(40,40,40,0.55);"></div><div class="r" style="left:20.1px;top:17px;width:13.56px;height:0.9px;background:rgba(40,40,40,0.55);"></div><div class="r" style="left:21.1px;top:28.700000000000003px;width:12.980000000000002px;height:1.1px;background:rgba(30,30,30,0.6);"></div><div class="r" style="left:3.6px;top:44px;width:42.6px;height:22.2px;background:#ffffff;border-radius:2.5px"></div><div class="r" style="left:5.2px;top:45.6px;width:13px;height:19.0px;background:linear-gradient(#c04030,#7a5a3a);border-radius:1.5px"></div><div class="r" style="left:20.1px;top:47px;width:22.6px;height:0.9px;background:rgba(40,40,40,0.55);"></div><div class="r" style="left:20.1px;top:49px;width:13.56px;height:0.9px;background:rgba(40,40,40,0.55);"></div><div class="r" style="left:21.1px;top:60.7px;width:12.980000000000002px;height:1.1px;background:rgba(30,30,30,0.6);"></div><div class="r" style="left:3.6px;top:71.7px;width:42.6px;height:22.2px;background:#ffffff;border-radius:2.5px"></div><div class="r" style="left:5.2px;top:73.3px;width:13px;height:19.0px;background:linear-gradient(#6a9aa0,#c08a60 50%,#3a6070);border-radius:1.5px"></div><div class="r" style="left:20.1px;top:74.7px;width:22.6px;height:0.9px;background:rgba(40,40,40,0.55);"></div><div class="r" style="left:20.1px;top:76.7px;width:13.56px;height:0.9px;background:rgba(40,40,40,0.55);"></div><div class="r" style="left:21.1px;top:88.4px;width:12.980000000000002px;height:1.1px;background:rgba(30,30,30,0.6);"></div></div>
<div class="r" style="left:891px;top:699px;width:50px;height:105.5px;background:repeating-linear-gradient(90deg,#2f2924 0px,#3c352e 2px,#262120 4px,#3a322b 6px);overflow:hidden;"><div class="r" style="left:0px;top:0px;width:14px;height:10px;background:#2a7a30;border-radius:0 0 12px 0"></div><div class="r" style="left:13px;top:7px;width:24px;height:3px;background:#e0ddd8;border-radius:1px"></div><div class="r" style="left:2.6px;top:12.7px;width:42.6px;height:22.5px;background:#ffffff;border-radius:2.5px"></div><div class="r" style="left:4.2px;top:14.299999999999999px;width:13px;height:19.3px;background:linear-gradient(#8ad0f4,#c04838 70%,#8ad0f4);border-radius:1.5px"></div><div class="r" style="left:19.1px;top:15.7px;width:22.6px;height:0.9px;background:rgba(40,40,40,0.55);"></div><div class="r" style="left:19.1px;top:17.7px;width:13.56px;height:0.9px;background:rgba(40,40,40,0.55);"></div><div class="r" style="left:20.1px;top:29.700000000000003px;width:12.980000000000002px;height:1.1px;background:rgba(30,30,30,0.6);"></div><div class="r" style="left:2.6px;top:37.3px;width:42.6px;height:22.5px;background:#ffffff;border-radius:2.5px"></div><div class="r" style="left:4.2px;top:38.9px;width:13px;height:19.3px;background:linear-gradient(#f8d8a8,#c86a3a 60%,#f8d8a8);border-radius:1.5px"></div><div class="r" style="left:19.1px;top:40.3px;width:22.6px;height:0.9px;background:rgba(40,40,40,0.55);"></div><div class="r" style="left:19.1px;top:42.3px;width:13.56px;height:0.9px;background:rgba(40,40,40,0.55);"></div><div class="r" style="left:20.1px;top:54.3px;width:12.980000000000002px;height:1.1px;background:rgba(30,30,30,0.6);"></div><div class="r" style="left:2.6px;top:62.9px;width:42.6px;height:22.5px;background:#ffffff;border-radius:2.5px"></div><div class="r" style="left:4.2px;top:64.5px;width:13px;height:19.3px;background:linear-gradient(#8ad0f4,#c04838 70%,#8ad0f4);border-radius:1.5px"></div><div class="r" style="left:19.1px;top:65.9px;width:22.6px;height:0.9px;background:rgba(40,40,40,0.55);"></div><div class="r" style="left:19.1px;top:67.9px;width:13.56px;height:0.9px;background:rgba(40,40,40,0.55);"></div><div class="r" style="left:20.1px;top:79.9px;width:12.980000000000002px;height:1.1px;background:rgba(30,30,30,0.6);"></div><div class="r" style="left:-4px;top:88px;width:16px;height:14px;background:#3a7a34;border-radius:50%"></div><div class="r" style="left:14px;top:96px;width:14px;height:8px;background:#2e6a2e;border-radius:50%"></div><div class="r" style="left:24px;top:98px;width:7px;height:5px;background:#a82828;border-radius:50%"></div><div class="r" style="left:30px;top:92px;width:10px;height:10px;background:#3a7a34;border-radius:50%"></div><div class="r" style="left:40px;top:92px;width:8px;height:12px;background:#d8c898;border-radius:2px"></div></div>
<div class="r" style="left:778px;top:815px;width:50px;height:105.6px;background:radial-gradient(ellipse 40% 8% at 70% 6%,rgba(255,255,255,.7),rgba(255,255,255,0)),radial-gradient(ellipse 30% 10% at 30% 14%,rgba(255,255,255,.6),rgba(255,255,255,0)),linear-gradient(180deg,#5a94b8 0%,#a8c8d8 14%,#c8d8d0 26%,#6a7a58 40%,#5a4634 55%,#3a2a1e 80%,#2e2218 100%);overflow:hidden;"><div class="r" style="left:10px;top:6.5px;width:26px;height:3px;background:#8a8a80;border-radius:1px"></div><div class="r" style="left:3px;top:2px;width:8px;height:3px;background:rgba(255,255,255,.5);"></div><div class="r" style="left:3.5px;top:13px;width:42.5px;height:22.5px;background:#ffffff;border-radius:2.5px"></div><div class="r" style="left:5.1px;top:14.6px;width:13px;height:19.3px;background:linear-gradient(#c8b040,#506030);border-radius:1.5px"></div><div class="r" style="left:20.0px;top:16px;width:22.5px;height:0.9px;background:rgba(40,40,40,0.55);"></div><div class="r" style="left:20.0px;top:18px;width:13.5px;height:0.9px;background:rgba(40,40,40,0.55);"></div><div class="r" style="left:21.0px;top:30.0px;width:12.925px;height:1.1px;background:rgba(30,30,30,0.6);"></div><div class="r" style="left:3.5px;top:40px;width:42.5px;height:22.5px;background:#ffffff;border-radius:2.5px"></div><div class="r" style="left:5.1px;top:41.6px;width:13px;height:19.3px;background:linear-gradient(#40a0b0,#204838);border-radius:1.5px"></div><div class="r" style="left:20.0px;top:43px;width:22.5px;height:0.9px;background:rgba(40,40,40,0.55);"></div><div class="r" style="left:20.0px;top:45px;width:13.5px;height:0.9px;background:rgba(40,40,40,0.55);"></div><div class="r" style="left:21.0px;top:57.0px;width:12.925px;height:1.1px;background:rgba(30,30,30,0.6);"></div><div class="r" style="left:3.5px;top:66.5px;width:42.5px;height:22.5px;background:#ffffff;border-radius:2.5px"></div><div class="r" style="left:5.1px;top:68.1px;width:13px;height:19.3px;background:linear-gradient(#90c060,#2a3020);border-radius:1.5px"></div><div class="r" style="left:20.0px;top:69.5px;width:22.5px;height:0.9px;background:rgba(40,40,40,0.55);"></div><div class="r" style="left:20.0px;top:71.5px;width:13.5px;height:0.9px;background:rgba(40,40,40,0.55);"></div><div class="r" style="left:21.0px;top:83.5px;width:12.925px;height:1.1px;background:rgba(30,30,30,0.6);"></div></div>
<div class="r" style="left:892px;top:815px;width:50px;height:105.6px;background:#2b9bc6;overflow:hidden;"><div class="r" style="left:12px;top:6.5px;width:24px;height:3px;background:#6b7b88;border-radius:1px"></div><div class="r" style="left:41px;top:1px;width:6px;height:6px;background:#9ae0f0;border-radius:50%;"></div><div class="r" style="left:3.2px;top:13px;width:43px;height:22.5px;background:#ffffff;border-radius:2.5px"></div><div class="r" style="left:4.800000000000001px;top:14.6px;width:13px;height:19.3px;background:linear-gradient(#7a8a9a,#3a4048);border-radius:1.5px"></div><div class="r" style="left:19.7px;top:16px;width:23px;height:0.9px;background:rgba(40,40,40,0.55);"></div><div class="r" style="left:19.7px;top:18px;width:13.799999999999999px;height:0.9px;background:rgba(40,40,40,0.55);"></div><div class="r" style="left:20.7px;top:30.0px;width:13.200000000000001px;height:1.1px;background:rgba(30,30,30,0.6);"></div><div class="r" style="left:3.2px;top:39px;width:43px;height:22.5px;background:#ffffff;border-radius:2.5px"></div><div class="r" style="left:4.800000000000001px;top:40.6px;width:13px;height:19.3px;background:linear-gradient(#c07040,#503828);border-radius:1.5px"></div><div class="r" style="left:19.7px;top:42px;width:23px;height:0.9px;background:rgba(40,40,40,0.55);"></div><div class="r" style="left:19.7px;top:44px;width:13.799999999999999px;height:0.9px;background:rgba(40,40,40,0.55);"></div><div class="r" style="left:20.7px;top:56.0px;width:13.200000000000001px;height:1.1px;background:rgba(30,30,30,0.6);"></div><div class="r" style="left:3.2px;top:65px;width:43px;height:22.5px;background:#ffffff;border-radius:2.5px"></div><div class="r" style="left:4.800000000000001px;top:66.6px;width:13px;height:19.3px;background:linear-gradient(#3050a0,#102040);border-radius:1.5px"></div><div class="r" style="left:19.7px;top:68px;width:23px;height:0.9px;background:rgba(40,40,40,0.55);"></div><div class="r" style="left:19.7px;top:70px;width:13.799999999999999px;height:0.9px;background:rgba(40,40,40,0.55);"></div><div class="r" style="left:20.7px;top:82.0px;width:13.200000000000001px;height:1.1px;background:rgba(30,30,30,0.6);"></div><div class="r" style="left:24px;top:88px;width:10px;height:8px;background:#e8f4f8;"></div><div class="r" style="left:19px;top:90px;width:4px;height:6px;background:#4a8a40;"></div></div>
<div class="t" style="left:955px;top:527px;font-size:15px;line-height:15px;color:#a6b0c4">La…</div>
<div class="t" style="left:779px;top:790px;font-size:15px;line-height:15px;color:#a6b0c4">Su…</div>
<div class="t" style="left:892px;top:790px;font-size:15px;line-height:15px;color:#a6b0c4">Su…</div>
<div class="t" style="left:835px;top:687px;font-size:15px;line-height:15px;color:#a6b0c4">Su</div>
<div class="t" style="left:325px;top:954px;font-size:16px;line-height:16px;color:#8f99ab;">Project type</div>
<div class="t" style="left:426px;top:954px;font-size:16px;line-height:16px;color:#f0f2f5;">iPhone 14</div>
<svg style="left:500px;top:950px;" width="30" height="20" viewBox="0 0 30 20"><polyline transform="translate(-500,-950)" points="511.2,958.8 514.7,962.3 518.2,958.8" fill="none" stroke="#8e99ad" stroke-width="2.3"/></svg>
<svg style="left:1570px;top:942px;" width="40" height="38" viewBox="0 0 40 38"><g transform="translate(-1570,-942)">
<circle cx="1588.4" cy="960.2" r="9.3" fill="none" stroke="#a9b3c7" stroke-width="2"/>
<path d="M1594,954.6 L1589.8,961.6 L1582.8,965.8 L1587,958.8 Z" fill="#a9b3c7"/>
<circle cx="1588.4" cy="960.2" r="1" fill="#20252f"/>
</g></svg>
<div class="t" style="left:1628.5px;top:63px;font-size:16px;line-height:16px;color:#a9b3c7;">Properties</div>
<div class="t" style="left:1723px;top:63px;font-size:16px;line-height:16px;color:#0a9ff7;">Interactions</div>
<div class="t" style="left:1844px;top:63px;font-size:16px;line-height:16px;color:#a9b3c7;">Notes</div>
<div class="r" style="left:1750px;top:90px;width:30px;height:2px;background:#0a9ff7;"></div>
<div class="r" style="left:1630px;top:113px;width:270px;height:45px;border-radius:4px;background:#049dfb"></div>
<div class="t" style="left:1630.0px;width:270px;text-align:center;top:128px;font-size:16px;line-height:16px;color:#ffffff;letter-spacing:0.1px">Add interaction</div>
<svg style="left:1720px;top:195px;" width="90" height="95" viewBox="0 0 90 95"><g transform="translate(-1720,-195)">
<path d="M1762,271.7 A31.8,31.8 0 1 1 1790.6,254.8" fill="none" stroke="#46546c" stroke-width="2"/>
<path d="M1762.5,256.8 A16.2,16.2 0 1 1 1778.8,245.8" fill="none" stroke="#0a9ff7" stroke-width="2.8"/>
<path d="M1770.2,248 L1789.8,265.8 L1782.5,266.5 L1786,274.5 L1781,277.4 L1777.4,269.5 L1771.2,274.5 Z" fill="#283043" stroke="#9ea8bb" stroke-width="2.5" stroke-linejoin="round" style="filter:drop-shadow(0 2px 2px rgba(0,0,0,.35))"/>
</g></svg>
<div class="t" style="left:1620.0px;width:290px;text-align:center;top:320px;font-size:16px;line-height:16px;color:#a9b3c7;letter-spacing:0.15px">Select a component or artboard and</div>
<div class="t" style="left:1620.0px;width:290px;text-align:center;top:345px;font-size:16px;line-height:16px;color:#a9b3c7;letter-spacing:0.15px">click "Add interaction"</div>
<svg style="left:1680px;top:430px;" width="170" height="110" viewBox="0 0 170 110"><g transform="translate(-1680,-430)">
<rect x="1694" y="441" width="58.5" height="87.5" fill="none" stroke="#35425a" stroke-width="1.3"/>
<rect x="1778.5" y="441" width="59" height="87.5" fill="none" stroke="#9aa3b5" stroke-width="2"/>
<rect x="1705" y="507.5" width="35.5" height="10.5" rx="5.25" fill="none" stroke="#9aa3b5" stroke-width="2"/>
<path d="M1740,497.5 Q1752,496 1755,485 Q1758,470 1766,469.5" fill="none" stroke="#e8375a" stroke-width="2"/>
<circle cx="1737.8" cy="498.5" r="2.4" fill="#283043" stroke="#e8375a" stroke-width="1.6"/>
<circle cx="1778" cy="469.2" r="11.2" fill="#283043" stroke="#e8375a" stroke-width="2.2"/>
<path d="M1775,472.5 L1773.8,471.3 Q1772.6,469.5 1774.2,468 L1775.5,466.8 Q1777,465.6 1778.5,467 M1781,466 L1782.2,467.2 Q1783.4,469 1781.8,470.5 L1780.5,471.7 Q1779,472.9 1777.5,471.5 M1776.2,470.5 L1779.8,467.5" fill="none" stroke="#e8375a" stroke-width="1.4" stroke-linecap="round"/>
</g></svg>
<div class="t" style="left:1620.0px;width:290px;text-align:center;top:573px;font-size:16px;line-height:16px;color:#a9b3c7;letter-spacing:0.15px">Or drag the Link Point of the</div>
<div class="t" style="left:1620.0px;width:290px;text-align:center;top:598px;font-size:16px;line-height:16px;color:#a9b3c7;letter-spacing:0.15px">component to any target</div>
<div class="t" style="left:1620.0px;width:290px;text-align:center;top:623px;font-size:16px;line-height:16px;color:#a9b3c7;letter-spacing:0.15px">component or page.</div>
</div></body></html>
